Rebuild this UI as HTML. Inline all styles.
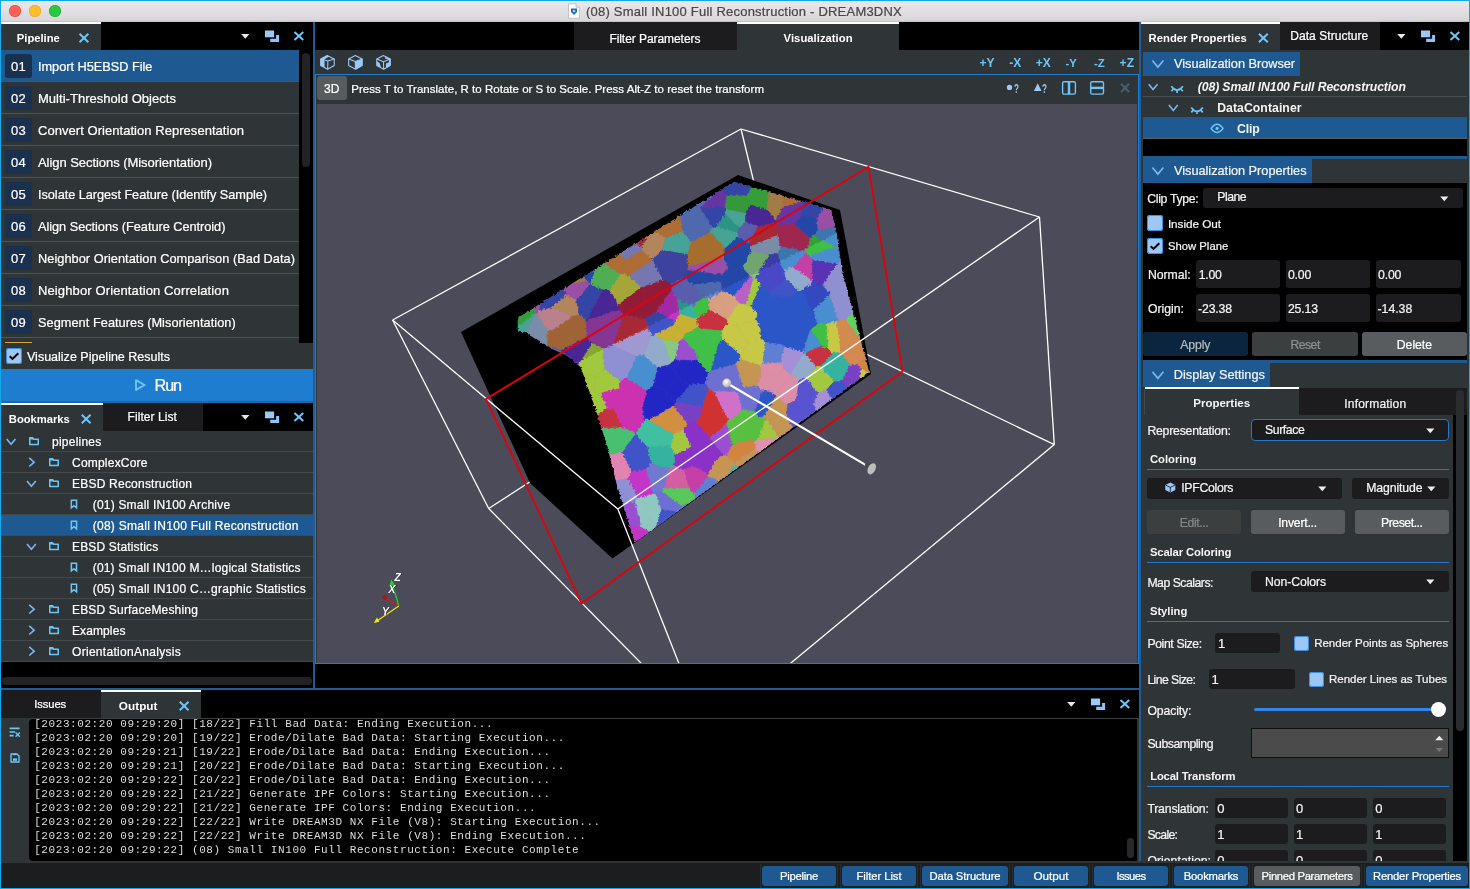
<!DOCTYPE html>
<html lang="en"><head><meta charset="utf-8"><title>(08) Small IN100 Full Reconstruction - DREAM3DNX</title>
<style>
html,body{margin:0;padding:0;}
body{width:1470px;height:889px;overflow:hidden;background:#000;position:relative;
font-family:"Liberation Sans",sans-serif;}
#app{position:absolute;left:0;top:0;width:1470px;height:889px;overflow:hidden;background:#000;will-change:transform;-webkit-font-smoothing:antialiased;}
#app div,#app svg,#app span.t{position:absolute;}
#app div{box-sizing:border-box;overflow:hidden;}
span.t{white-space:pre;display:block;-webkit-text-stroke:0.22px currentColor;}
</style></head>
<body><div id="app">
<div style="left:0px;top:0px;width:1470px;height:22px;background:linear-gradient(#ebe9eb,#d8d6d8);border-bottom:1px solid #c4c2c4;"></div>
<div style="left:9px;top:5px;width:12px;height:12px;background:#fe5f57;border-radius:50%;box-shadow:inset 0 0 0 0.5px #e2463f;"></div>
<div style="left:29px;top:5px;width:12px;height:12px;background:#febc2e;border-radius:50%;box-shadow:inset 0 0 0 0.5px #e0a028;"></div>
<div style="left:49px;top:5px;width:12px;height:12px;background:#28c840;border-radius:50%;box-shadow:inset 0 0 0 0.5px #1eab2d;"></div>
<svg style="left:567px;top:3px;" width="14" height="16" viewBox="0 0 14 16"><path d="M1.5 0.8 L9 0.8 L12.5 4.3 L12.5 15.2 L1.5 15.2Z" fill="#fdfdfd" stroke="#b9b9b9" stroke-width="0.8"/><path d="M9 0.8 L9 4.3 L12.5 4.3" fill="#e4e4e4" stroke="#b9b9b9" stroke-width="0.8"/><path d="M4 5.5 L10 5.5 L10 9 L7 12 L4 9Z" fill="#2a68b8"/><circle cx="7" cy="8" r="1.3" fill="#9fd0ff"/></svg>
<span class="t" style="left:586.00px;top:3.00px;font-size:13px;line-height:17px;color:#484848;letter-spacing:0.216px;">(08) Small IN100 Full Reconstruction - DREAM3DNX</span>
<div style="left:1px;top:22px;width:312px;height:666px;background:#2f3436;"></div>
<div style="left:1px;top:22px;width:312px;height:28px;background:#000;"></div>
<div style="left:1px;top:22px;width:100px;height:28px;background:#2f3436;"></div>
<div style="left:1px;top:22px;width:100px;height:2px;background:#fff;"></div>
<span class="t" style="left:16.80px;top:30.00px;font-size:11.25px;line-height:16px;color:#fff;font-weight:700;-webkit-text-stroke:0;letter-spacing:-0.018px;">Pipeline</span>
<svg style="left:76px;top:31px;" width="15" height="15" viewBox="0 0 15 15"><path d="M3.55 2.80L12.35 11.20M12.35 2.80L3.55 11.20" stroke="#6cc6fa" stroke-width="2.0" fill="none"/></svg>
<svg style="left:241px;top:33px;" width="10" height="7" viewBox="0 0 10 7"><path d="M0.2 1 L8.4 1 L4.3 5.7Z" fill="#e8e8e8"/></svg><svg style="left:265px;top:30px;" width="15" height="13" viewBox="0 0 15 13"><rect x="0" y="0.5" width="9.1" height="6.8" fill="#9cc8f8"/><path d="M11.1 4.9 H14.1 V12 H5.2 V8.7 H11.1Z" fill="#8fc2f8"/></svg><svg style="left:291px;top:28px;" width="15" height="15" viewBox="0 0 15 15"><path d="M3.45 3.90L12.25 11.90M12.25 3.90L3.45 11.90" stroke="#6cc6fa" stroke-width="2.0" fill="none"/></svg>
<div style="left:299px;top:50px;width:14px;height:293px;background:#000;"></div>
<div style="left:302px;top:53px;width:8px;height:114px;background:#232325;border-radius:4px;"></div>
<div style="left:1px;top:50px;width:298px;height:31px;background:#1e5a91;"></div>
<div style="left:1px;top:81px;width:298px;height:1px;background:#4f5355;"></div>
<div style="left:5px;top:54px;width:27px;height:24px;background:#19304f;border-radius:3px;"></div>
<span class="t" style="left:11.00px;top:58.00px;font-size:13px;line-height:17px;color:#fff;letter-spacing:0.266px;">01</span>
<span class="t" style="left:38.00px;top:58.00px;font-size:12.75px;line-height:17px;color:#fff;letter-spacing:-0.021px;">Import H5EBSD File</span>
<div style="left:1px;top:113px;width:298px;height:1px;background:#4f5355;"></div>
<div style="left:5px;top:86px;width:27px;height:24px;background:#19304f;border-radius:3px;"></div>
<span class="t" style="left:11.00px;top:90.00px;font-size:13px;line-height:17px;color:#fff;letter-spacing:0.266px;">02</span>
<span class="t" style="left:38.00px;top:90.00px;font-size:13px;line-height:17px;color:#fff;letter-spacing:0.031px;">Multi-Threshold Objects</span>
<div style="left:1px;top:145px;width:298px;height:1px;background:#4f5355;"></div>
<div style="left:5px;top:118px;width:27px;height:24px;background:#19304f;border-radius:3px;"></div>
<span class="t" style="left:11.00px;top:122.00px;font-size:13px;line-height:17px;color:#fff;letter-spacing:0.266px;">03</span>
<span class="t" style="left:38.00px;top:122.00px;font-size:13px;line-height:17px;color:#fff;letter-spacing:0.044px;">Convert Orientation Representation</span>
<div style="left:1px;top:177px;width:298px;height:1px;background:#4f5355;"></div>
<div style="left:5px;top:150px;width:27px;height:24px;background:#19304f;border-radius:3px;"></div>
<span class="t" style="left:11.00px;top:154.00px;font-size:13px;line-height:17px;color:#fff;letter-spacing:0.266px;">04</span>
<span class="t" style="left:38.00px;top:154.00px;font-size:13px;line-height:17px;color:#fff;letter-spacing:-0.051px;">Align Sections (Misorientation)</span>
<div style="left:1px;top:209px;width:298px;height:1px;background:#4f5355;"></div>
<div style="left:5px;top:182px;width:27px;height:24px;background:#19304f;border-radius:3px;"></div>
<span class="t" style="left:11.00px;top:186.00px;font-size:13px;line-height:17px;color:#fff;letter-spacing:0.266px;">05</span>
<span class="t" style="left:38.00px;top:186.00px;font-size:12.75px;line-height:17px;color:#fff;letter-spacing:-0.050px;">Isolate Largest Feature (Identify Sample)</span>
<div style="left:1px;top:241px;width:298px;height:1px;background:#4f5355;"></div>
<div style="left:5px;top:214px;width:27px;height:24px;background:#19304f;border-radius:3px;"></div>
<span class="t" style="left:11.00px;top:218.00px;font-size:13px;line-height:17px;color:#fff;letter-spacing:0.266px;">06</span>
<span class="t" style="left:38.00px;top:218.00px;font-size:12.75px;line-height:17px;color:#fff;letter-spacing:-0.034px;">Align Sections (Feature Centroid)</span>
<div style="left:1px;top:273px;width:298px;height:1px;background:#4f5355;"></div>
<div style="left:5px;top:246px;width:27px;height:24px;background:#19304f;border-radius:3px;"></div>
<span class="t" style="left:11.00px;top:250.00px;font-size:13px;line-height:17px;color:#fff;letter-spacing:0.266px;">07</span>
<span class="t" style="left:38.00px;top:250.00px;font-size:12.75px;line-height:17px;color:#fff;letter-spacing:0.045px;">Neighbor Orientation Comparison (Bad Data)</span>
<div style="left:1px;top:305px;width:298px;height:1px;background:#4f5355;"></div>
<div style="left:5px;top:278px;width:27px;height:24px;background:#19304f;border-radius:3px;"></div>
<span class="t" style="left:11.00px;top:282.00px;font-size:13px;line-height:17px;color:#fff;letter-spacing:0.266px;">08</span>
<span class="t" style="left:38.00px;top:282.00px;font-size:13px;line-height:17px;color:#fff;letter-spacing:0.120px;">Neighbor Orientation Correlation</span>
<div style="left:1px;top:337px;width:298px;height:1px;background:#4f5355;"></div>
<div style="left:5px;top:310px;width:27px;height:24px;background:#19304f;border-radius:3px;"></div>
<span class="t" style="left:11.00px;top:314.00px;font-size:13px;line-height:17px;color:#fff;letter-spacing:0.266px;">09</span>
<span class="t" style="left:38.00px;top:314.00px;font-size:12.75px;line-height:17px;color:#fff;letter-spacing:0.043px;">Segment Features (Misorientation)</span>
<div style="left:5px;top:342px;width:27px;height:1px;background:#d8a02c;"></div>
<div style="left:6px;top:348px;width:16px;height:16px;background:#9cc7f7;border-radius:3px;box-shadow:inset 0 0 0 1px #3d8fe6;"><svg style="left:0px;top:0px;" width="16" height="16" viewBox="0 0 16 16"><path d="M3.7 8.3 L6.5 10.9 L12.3 5.3" stroke="#000" stroke-width="2.1" fill="none"/></svg></div>
<span class="t" style="left:27.00px;top:349.00px;font-size:12.5px;line-height:17px;color:#fff;letter-spacing:0.004px;">Visualize Pipeline Results</span>
<div style="left:1px;top:369px;width:312px;height:33px;background:#1f7dd0;"></div>
<div style="left:1px;top:401px;width:312px;height:2px;background:#1a68b0;"></div>
<svg style="left:134px;top:378px;" width="13" height="14" viewBox="0 0 13 14"><path d="M2 2.1 L10.6 7 L2 11.9 Z" stroke="#6cc6fa" stroke-width="1.9" fill="none" stroke-linejoin="round"/></svg>
<span class="t" style="left:154.50px;top:374.00px;font-size:16.25px;line-height:22px;color:#fff;letter-spacing:-1.104px;">Run</span>
<div style="left:1px;top:403px;width:312px;height:28px;background:#000;"></div>
<div style="left:1px;top:403px;width:102px;height:28px;background:#2f3436;"></div>
<div style="left:1px;top:403px;width:102px;height:2px;background:#fff;"></div>
<div style="left:103px;top:403px;width:100px;height:28px;background:#1c1c1f;"></div>
<span class="t" style="left:8.80px;top:411.00px;font-size:11.25px;line-height:16px;color:#fff;font-weight:700;-webkit-text-stroke:0;letter-spacing:-0.031px;">Bookmarks</span>
<svg style="left:79px;top:412px;" width="15" height="15" viewBox="0 0 15 15"><path d="M2.75 2.80L11.55 11.20M11.55 2.80L2.75 11.20" stroke="#6cc6fa" stroke-width="2.0" fill="none"/></svg>
<span class="t" style="left:127.50px;top:409.00px;font-size:12px;line-height:16px;color:#fff;letter-spacing:0.074px;">Filter List</span>
<svg style="left:241px;top:414px;" width="10" height="7" viewBox="0 0 10 7"><path d="M0.2 1 L8.4 1 L4.3 5.7Z" fill="#e8e8e8"/></svg><svg style="left:265px;top:411px;" width="15" height="13" viewBox="0 0 15 13"><rect x="0" y="0.5" width="9.1" height="6.8" fill="#9cc8f8"/><path d="M11.1 4.9 H14.1 V12 H5.2 V8.7 H11.1Z" fill="#8fc2f8"/></svg><svg style="left:291px;top:409px;" width="15" height="15" viewBox="0 0 15 15"><path d="M3.45 3.90L12.25 11.90M12.25 3.90L3.45 11.90" stroke="#6cc6fa" stroke-width="2.0" fill="none"/></svg>
<div style="left:1px;top:662px;width:312px;height:26px;background:#000;"></div>
<div style="left:1px;top:451px;width:312px;height:1px;background:#44484a;"></div>
<svg style="left:5px;top:435px;" width="15" height="12" viewBox="0 0 15 12"><path d="M1.70 3.90 L6.10 9.30 L10.50 3.90" stroke="#79b7f4" stroke-width="1.6" fill="none"/></svg>
<svg style="left:29px;top:437px;" width="12" height="10" viewBox="0 0 12 10"><g transform="translate(0.00 0.10)"><path d="M0.75 7.45 V0.75 H3.8 L4.6 2.1 H9.25 V7.45 Z" stroke="#6cc6fa" stroke-width="1.5" fill="none" stroke-linejoin="round"/><path d="M0.75 0.75 H3.8 L4.6 2.4 H0.75Z" fill="#6cc6fa"/></g></svg>
<span class="t" style="left:52.00px;top:434.00px;font-size:12px;line-height:16px;color:#fff;letter-spacing:0.236px;">pipelines</span>
<div style="left:1px;top:472px;width:312px;height:1px;background:#44484a;"></div>
<svg style="left:28px;top:455px;" width="10" height="14" viewBox="0 0 10 14"><path d="M1.20 2.90 L6.20 7.20 L1.20 11.50" stroke="#79b7f4" stroke-width="1.6" fill="none"/></svg>
<svg style="left:49px;top:458px;" width="12" height="10" viewBox="0 0 12 10"><g transform="translate(0.00 0.10)"><path d="M0.75 7.45 V0.75 H3.8 L4.6 2.1 H9.25 V7.45 Z" stroke="#6cc6fa" stroke-width="1.5" fill="none" stroke-linejoin="round"/><path d="M0.75 0.75 H3.8 L4.6 2.4 H0.75Z" fill="#6cc6fa"/></g></svg>
<span class="t" style="left:72.00px;top:455.00px;font-size:12px;line-height:16px;color:#fff;letter-spacing:0.213px;">ComplexCore</span>
<div style="left:1px;top:493px;width:312px;height:1px;background:#44484a;"></div>
<svg style="left:26px;top:477px;" width="15" height="12" viewBox="0 0 15 12"><path d="M1.00 3.90 L5.40 9.30 L9.80 3.90" stroke="#79b7f4" stroke-width="1.6" fill="none"/></svg>
<svg style="left:49px;top:479px;" width="12" height="10" viewBox="0 0 12 10"><g transform="translate(0.00 0.10)"><path d="M0.75 7.45 V0.75 H3.8 L4.6 2.1 H9.25 V7.45 Z" stroke="#6cc6fa" stroke-width="1.5" fill="none" stroke-linejoin="round"/><path d="M0.75 0.75 H3.8 L4.6 2.4 H0.75Z" fill="#6cc6fa"/></g></svg>
<span class="t" style="left:72.00px;top:476.00px;font-size:12px;line-height:16px;color:#fff;letter-spacing:0.218px;">EBSD Reconstruction</span>
<div style="left:1px;top:514px;width:312px;height:1px;background:#44484a;"></div>
<svg style="left:70px;top:499px;" width="9" height="11" viewBox="0 0 9 11"><g transform="translate(0.60 0.40)"><path d="M0.75 0.75 H5.95 V8.5 L3.35 6.3 L0.75 8.5 Z" stroke="#6cc6fa" stroke-width="1.5" fill="none"/></g></svg>
<span class="t" style="left:92.70px;top:497.00px;font-size:12px;line-height:16px;color:#fff;letter-spacing:0.203px;">(01) Small IN100 Archive</span>
<div style="left:1px;top:515px;width:312px;height:20px;background:#1e5a91;"></div>
<div style="left:1px;top:535px;width:312px;height:1px;background:#44484a;"></div>
<svg style="left:70px;top:520px;" width="9" height="11" viewBox="0 0 9 11"><g transform="translate(0.60 0.40)"><path d="M0.75 0.75 H5.95 V8.5 L3.35 6.3 L0.75 8.5 Z" stroke="#6cc6fa" stroke-width="1.5" fill="none"/></g></svg>
<span class="t" style="left:92.70px;top:518.00px;font-size:12px;line-height:16px;color:#fff;letter-spacing:0.276px;">(08) Small IN100 Full Reconstruction</span>
<div style="left:1px;top:556px;width:312px;height:1px;background:#44484a;"></div>
<svg style="left:26px;top:540px;" width="15" height="12" viewBox="0 0 15 12"><path d="M1.00 3.90 L5.40 9.30 L9.80 3.90" stroke="#79b7f4" stroke-width="1.6" fill="none"/></svg>
<svg style="left:49px;top:542px;" width="12" height="10" viewBox="0 0 12 10"><g transform="translate(0.00 0.10)"><path d="M0.75 7.45 V0.75 H3.8 L4.6 2.1 H9.25 V7.45 Z" stroke="#6cc6fa" stroke-width="1.5" fill="none" stroke-linejoin="round"/><path d="M0.75 0.75 H3.8 L4.6 2.4 H0.75Z" fill="#6cc6fa"/></g></svg>
<span class="t" style="left:72.00px;top:539.00px;font-size:12px;line-height:16px;color:#fff;letter-spacing:0.158px;">EBSD Statistics</span>
<div style="left:1px;top:577px;width:312px;height:1px;background:#44484a;"></div>
<svg style="left:70px;top:562px;" width="9" height="11" viewBox="0 0 9 11"><g transform="translate(0.60 0.40)"><path d="M0.75 0.75 H5.95 V8.5 L3.35 6.3 L0.75 8.5 Z" stroke="#6cc6fa" stroke-width="1.5" fill="none"/></g></svg>
<span class="t" style="left:92.70px;top:560.00px;font-size:12px;line-height:16px;color:#fff;letter-spacing:0.196px;">(01) Small IN100 M…logical Statistics</span>
<div style="left:1px;top:598px;width:312px;height:1px;background:#44484a;"></div>
<svg style="left:70px;top:583px;" width="9" height="11" viewBox="0 0 9 11"><g transform="translate(0.60 0.40)"><path d="M0.75 0.75 H5.95 V8.5 L3.35 6.3 L0.75 8.5 Z" stroke="#6cc6fa" stroke-width="1.5" fill="none"/></g></svg>
<span class="t" style="left:92.70px;top:581.00px;font-size:12px;line-height:16px;color:#fff;letter-spacing:0.231px;">(05) Small IN100 C…graphic Statistics</span>
<div style="left:1px;top:619px;width:312px;height:1px;background:#44484a;"></div>
<svg style="left:28px;top:602px;" width="10" height="14" viewBox="0 0 10 14"><path d="M1.20 2.90 L6.20 7.20 L1.20 11.50" stroke="#79b7f4" stroke-width="1.6" fill="none"/></svg>
<svg style="left:49px;top:605px;" width="12" height="10" viewBox="0 0 12 10"><g transform="translate(0.00 0.10)"><path d="M0.75 7.45 V0.75 H3.8 L4.6 2.1 H9.25 V7.45 Z" stroke="#6cc6fa" stroke-width="1.5" fill="none" stroke-linejoin="round"/><path d="M0.75 0.75 H3.8 L4.6 2.4 H0.75Z" fill="#6cc6fa"/></g></svg>
<span class="t" style="left:72.00px;top:602.00px;font-size:12px;line-height:16px;color:#fff;letter-spacing:0.172px;">EBSD SurfaceMeshing</span>
<div style="left:1px;top:640px;width:312px;height:1px;background:#44484a;"></div>
<svg style="left:28px;top:623px;" width="10" height="14" viewBox="0 0 10 14"><path d="M1.20 2.90 L6.20 7.20 L1.20 11.50" stroke="#79b7f4" stroke-width="1.6" fill="none"/></svg>
<svg style="left:49px;top:626px;" width="12" height="10" viewBox="0 0 12 10"><g transform="translate(0.00 0.10)"><path d="M0.75 7.45 V0.75 H3.8 L4.6 2.1 H9.25 V7.45 Z" stroke="#6cc6fa" stroke-width="1.5" fill="none" stroke-linejoin="round"/><path d="M0.75 0.75 H3.8 L4.6 2.4 H0.75Z" fill="#6cc6fa"/></g></svg>
<span class="t" style="left:72.00px;top:623.00px;font-size:12px;line-height:16px;color:#fff;letter-spacing:0.102px;">Examples</span>
<div style="left:1px;top:661px;width:312px;height:1px;background:#44484a;"></div>
<svg style="left:28px;top:644px;" width="10" height="14" viewBox="0 0 10 14"><path d="M1.20 2.90 L6.20 7.20 L1.20 11.50" stroke="#79b7f4" stroke-width="1.6" fill="none"/></svg>
<svg style="left:49px;top:647px;" width="12" height="10" viewBox="0 0 12 10"><g transform="translate(0.00 0.10)"><path d="M0.75 7.45 V0.75 H3.8 L4.6 2.1 H9.25 V7.45 Z" stroke="#6cc6fa" stroke-width="1.5" fill="none" stroke-linejoin="round"/><path d="M0.75 0.75 H3.8 L4.6 2.4 H0.75Z" fill="#6cc6fa"/></g></svg>
<span class="t" style="left:72.00px;top:644.00px;font-size:12px;line-height:16px;color:#fff;letter-spacing:0.295px;">OrientationAnalysis</span>
<div style="left:2px;top:677px;width:310px;height:8px;background:#232325;border-radius:4px;"></div>
<div style="left:313px;top:22px;width:2px;height:666px;background:#1f5c98;"></div>
<div style="left:315px;top:22px;width:824px;height:28px;background:#000;"></div>
<div style="left:315px;top:50px;width:824px;height:614px;background:#2f3436;"></div>
<div style="left:315px;top:664px;width:824px;height:24px;background:#000;"></div>
<div style="left:574px;top:22px;width:163px;height:28px;background:#1c1c1f;"></div>
<div style="left:737px;top:22px;width:162px;height:28px;background:#2f3436;"></div>
<div style="left:737px;top:22px;width:162px;height:2px;background:#fff;"></div>
<span class="t" style="left:609.40px;top:31.00px;font-size:12px;line-height:16px;color:#fff;letter-spacing:-0.061px;">Filter Parameters</span>
<span class="t" style="left:783.60px;top:30.00px;font-size:11.25px;line-height:16px;color:#fff;font-weight:700;-webkit-text-stroke:0;letter-spacing:0.034px;">Visualization</span>
<svg style="left:319px;top:54px;" width="17" height="17" viewBox="0 0 17 17"><g transform="translate(8.45 8.40) scale(0.91) translate(-7.65 -7.8)"><polygon points="0.2,4.1 7.4,0.3 9.5,1.4 4.5,4.3 4.5,13.5 0.2,11.2" fill="#9cc8f8"/><path d="M8.1 6.3 L7.9 15.3 M8.1 6.3 L15.1 4.1 M8.1 6.3 L4.5 5.1" stroke="#9cc8f8" stroke-width="1.2" fill="none" stroke-linejoin="round"/><polygon points="7.4,0.3 15.1,4.1 15.1,11.2 7.8,15.3 0.2,11.2 0.2,4.1" stroke="#9cc8f8" stroke-width="1.2" fill="none" stroke-linejoin="round"/></g></svg>
<svg style="left:347px;top:54px;" width="17" height="17" viewBox="0 0 17 17"><g transform="translate(8.45 8.40) scale(0.91) translate(-7.65 -7.8)"><polygon points="7.4,7 15.1,4.1 15.1,11.2 7.8,15.3" fill="#9cc8f8"/><path d="M7.4 6.9 L7.7 15.3 M7.4 6.9 L15.1 4.1 M7.4 6.9 L0.2 4.1" stroke="#9cc8f8" stroke-width="1.2" fill="none" stroke-linejoin="round"/><polygon points="7.4,0.3 15.1,4.1 15.1,11.2 7.8,15.3 0.2,11.2 0.2,4.1" stroke="#9cc8f8" stroke-width="1.2" fill="none" stroke-linejoin="round"/></g></svg>
<svg style="left:375px;top:54px;" width="17" height="17" viewBox="0 0 17 17"><g transform="translate(8.55 8.40) scale(0.91) translate(-7.65 -7.8)"><polygon points="7.4,0.3 15.1,4.1 15.1,11.2 10.3,13.8 10.3,9 13.6,7.6 13.6,5 9,3.6 10,2 " fill="#9cc8f8"/><polygon points="0.2,6.3 3.3,8.4 4.9,13.3 0.2,11.2" fill="#9cc8f8"/><path d="M7.6 7 L7.8 15.3 M7.6 7 L15.1 4.1 M7.6 7 L0.2 4.1" stroke="#9cc8f8" stroke-width="1.2" fill="none" stroke-linejoin="round"/><polygon points="7.4,0.3 15.1,4.1 15.1,11.2 7.8,15.3 0.2,11.2 0.2,4.1" stroke="#9cc8f8" stroke-width="1.2" fill="none" stroke-linejoin="round"/></g></svg>
<span class="t" style="left:979.50px;top:55.00px;font-size:12px;line-height:16px;color:#6cc6fa;font-weight:700;-webkit-text-stroke:0;letter-spacing:-0.058px;">+Y</span>
<span class="t" style="left:1009.20px;top:55.00px;font-size:12px;line-height:16px;color:#6cc6fa;font-weight:700;-webkit-text-stroke:0;letter-spacing:0.050px;">-X</span>
<span class="t" style="left:1035.70px;top:55.00px;font-size:12px;line-height:16px;color:#6cc6fa;font-weight:700;-webkit-text-stroke:0;letter-spacing:-0.058px;">+X</span>
<span class="t" style="left:1065.40px;top:55.00px;font-size:11.25px;line-height:16px;color:#6cc6fa;font-weight:700;-webkit-text-stroke:0;letter-spacing:0.025px;">-Y</span>
<span class="t" style="left:1094.00px;top:55.00px;font-size:11.5px;line-height:16px;color:#6cc6fa;font-weight:700;-webkit-text-stroke:0;letter-spacing:-0.030px;">-Z</span>
<span class="t" style="left:1119.60px;top:55.00px;font-size:12px;line-height:16px;color:#6cc6fa;font-weight:700;-webkit-text-stroke:0;letter-spacing:0.028px;">+Z</span>
<div style="left:315px;top:74px;width:824px;height:590px;border:1px solid #1f7dd2;"></div>
<div style="left:317px;top:76px;width:30px;height:24px;background:#585c5e;border-radius:3px;"></div>
<span class="t" style="left:324.00px;top:81.00px;font-size:12px;line-height:16px;color:#fff;letter-spacing:-0.022px;">3D</span>
<span class="t" style="left:351.30px;top:81.00px;font-size:11.5px;line-height:16px;color:#fff;letter-spacing:0.018px;">Press T to Translate, R to Rotate or S to Scale. Press Alt-Z to reset the transform</span>
<svg style="left:1006px;top:80px;" width="8" height="15" viewBox="0 0 8 15"><circle cx="3.5" cy="7.4" r="2.65" fill="#9cc8f8"/></svg>
<span class="t" style="left:1014.00px;top:80.00px;font-size:13px;line-height:17px;color:#9cc8f8;font-weight:700;-webkit-text-stroke:0;transform:scaleX(0.62);transform-origin:0 0;">?</span>
<svg style="left:1033px;top:80px;" width="10" height="15" viewBox="0 0 10 15"><path d="M0.9 11 L4.7 3.2 L8.5 11Z" fill="#9cc8f8"/></svg>
<span class="t" style="left:1042.20px;top:80.00px;font-size:13px;line-height:17px;color:#9cc8f8;font-weight:700;-webkit-text-stroke:0;transform:scaleX(0.62);transform-origin:0 0;">?</span>
<svg style="left:1061px;top:80px;" width="16" height="16" viewBox="0 0 16 16"><rect x="1.6" y="1.7" width="12.8" height="12.4" rx="1.6" fill="none" stroke="#6cc6fa" stroke-width="1.4"/><path d="M8 1.7V14.1" stroke="#6cc6fa" stroke-width="2.4"/></svg>
<svg style="left:1089px;top:80px;" width="16" height="16" viewBox="0 0 16 16"><rect x="1.7" y="1.7" width="12.8" height="12.4" rx="1.6" fill="none" stroke="#6cc6fa" stroke-width="1.4"/><path d="M1.7 7.9H14.5" stroke="#6cc6fa" stroke-width="2.4"/></svg>
<svg style="left:1118px;top:80px;" width="15" height="15" viewBox="0 0 15 15"><path d="M3.1 3.8 L11.1 12 M11.1 3.8 L3.1 12" stroke="#41606f" stroke-width="2.1" fill="none"/></svg>
<svg style="left:317px;top:104px;" width="820" height="559" viewBox="0 0 820 559"><rect width="820" height="559" fill="#4c4b59"/><line x1="424.0" y1="25.0" x2="469.2" y2="211.7" stroke="#fff" stroke-width="1.3"/><line x1="171.7" y1="404.5" x2="469.2" y2="211.7" stroke="#fff" stroke-width="1.3"/><line x1="737.3" y1="340.6" x2="469.2" y2="211.7" stroke="#fff" stroke-width="1.3"/><polygon points="144.0,228.0 421.0,71.0 523.0,106.0 554.0,270.0 317.5,439.0 295.4,454.6 213.0,379.0" fill="#000"/><defs><filter id="jag" x="-5%" y="-5%" width="110%" height="110%"><feTurbulence type="fractalNoise" baseFrequency="0.42" numOctaves="1" seed="4" result="n"/><feDisplacementMap in="SourceGraphic" in2="n" scale="4.5" xChannelSelector="R" yChannelSelector="G"/></filter><clipPath id="gclip"><polygon points="153.0,236.0 417.0,77.0 515.0,105.0 553.0,268.5 317.0,439.5 243.0,396.0"/></clipPath></defs><polygon points="215.0,217.0 417.0,78.5 513.5,106.5 519.0,129.0 525.0,168.0 551.5,268.0 324.0,434.0 309.0,386.0 300.0,348.0 289.0,312.0 276.0,270.0 255.0,254.0 235.0,245.0 221.0,235.0" fill="#7f74b6"/><g clip-path="url(#gclip)"><g filter="url(#jag)"><polygon points="201.0,214.0 417.0,78.0 514.0,106.0 519.0,128.0 525.0,168.0 552.0,268.0 318.0,438.0 300.0,380.0 291.0,344.0 280.0,308.0 264.0,263.0 246.0,248.0 228.0,241.0 210.0,229.0 201.0,226.0" fill="#8a70b8"/><polygon points="218.2,209.8 219.6,209.2 216.2,204.4 209.5,208.7" fill="#3fbf45" stroke="#3fbf45" stroke-width="0.6"/><polygon points="219.6,209.2 219.9,209.2 222.3,206.7 224.0,199.5 216.2,204.4" fill="#b860c8" stroke="#b860c8" stroke-width="0.6"/><polygon points="229.7,241.7 244.7,247.5 244.1,245.7 230.6,240.9" fill="#6d6fd0" stroke="#6d6fd0" stroke-width="0.6"/><polygon points="313.3,422.3 313.0,421.8 313.2,422.4" fill="#8f8fd4" stroke="#8f8fd4" stroke-width="0.6"/><polygon points="278.5,272.5 287.1,265.0 286.6,244.0 275.5,238.8 261.1,260.6 264.0,263.0 266.4,269.7" fill="#a2c83c" stroke="#a2c83c" stroke-width="0.6"/><polygon points="278.5,272.5 266.4,269.7 273.7,290.3 277.0,287.5" fill="#a2c83c" stroke="#a2c83c" stroke-width="0.6"/><polygon points="290.1,304.5 288.1,297.2 283.0,289.2 277.0,287.5 273.7,290.3 280.0,308.0 280.8,310.5" fill="#a2c83c" stroke="#a2c83c" stroke-width="0.6"/><polygon points="306.7,323.7 296.7,304.6 290.1,304.5 280.8,310.5 285.0,324.5" fill="#c8323f" stroke="#c8323f" stroke-width="0.6"/><polygon points="319.1,328.9 306.7,323.7 285.0,324.5 291.0,344.0 292.9,351.6 305.1,347.9 319.1,329.7" fill="#48c070" stroke="#48c070" stroke-width="0.6"/><polygon points="311.0,374.8 314.9,368.1 305.1,347.9 292.9,351.6 299.1,376.6" fill="#e284b2" stroke="#e284b2" stroke-width="0.6"/><polygon points="321.2,394.1 311.0,374.8 299.1,376.6 300.0,380.0 306.7,401.7 318.1,396.9" fill="#8f8fd4" stroke="#8f8fd4" stroke-width="0.6"/><polygon points="318.1,396.9 306.7,401.7 313.0,421.8 313.3,422.3 324.5,422.9" fill="#9a50d0" stroke="#9a50d0" stroke-width="0.6"/><polygon points="324.5,422.9 313.3,422.3 313.2,422.4 318.0,438.0 332.8,427.2" fill="#c234c6" stroke="#c234c6" stroke-width="0.6"/><polygon points="270.2,177.2 273.8,179.3 278.0,165.5 265.9,173.1" fill="#2b56c8" stroke="#2b56c8" stroke-width="0.6"/><polygon points="301.4,284.9 303.9,276.6 287.1,265.0 278.5,272.5 277.0,287.5 283.0,289.2" fill="#a2c83c" stroke="#a2c83c" stroke-width="0.6"/><polygon points="302.3,289.4 301.4,284.9 283.0,289.2 288.1,297.2" fill="#cc30b0" stroke="#cc30b0" stroke-width="0.6"/><polygon points="290.1,304.5 296.7,304.6 304.1,294.7 302.3,289.4 288.1,297.2" fill="#cc30b0" stroke="#cc30b0" stroke-width="0.6"/><polygon points="325.6,305.3 304.1,294.7 296.7,304.6 306.7,323.7 319.1,328.9 328.3,316.1" fill="#cc30b0" stroke="#cc30b0" stroke-width="0.6"/><polygon points="330.8,343.2 319.1,329.7 305.1,347.9 314.9,368.1 329.0,365.3 334.2,358.8" fill="#3f52c8" stroke="#3f52c8" stroke-width="0.6"/><polygon points="329.0,365.3 314.9,368.1 311.0,374.8 321.2,394.1 324.6,393.8 336.9,389.7" fill="#c234c6" stroke="#c234c6" stroke-width="0.6"/><polygon points="332.8,427.2 336.6,424.5 324.6,393.8 321.2,394.1 318.1,396.9 324.5,422.9" fill="#8fc8c0" stroke="#8fc8c0" stroke-width="0.6"/><polygon points="344.7,406.0 338.9,390.1 336.9,389.7 324.6,393.8 336.6,424.5 339.0,422.8" fill="#8fc8c0" stroke="#8fc8c0" stroke-width="0.6"/><polygon points="286.6,244.0 287.1,265.0 303.9,276.6 309.3,274.5 319.9,252.5 295.5,241.0" fill="#8f8fd4" stroke="#8f8fd4" stroke-width="0.6"/><polygon points="304.1,294.7 325.6,305.3 330.3,286.2 309.3,274.5 303.9,276.6 301.4,284.9 302.3,289.4" fill="#cc30b0" stroke="#cc30b0" stroke-width="0.6"/><polygon points="334.2,358.8 329.0,365.3 336.9,389.7 338.9,390.1 345.1,387.1 347.2,384.8 352.8,364.0" fill="#7078d0" stroke="#7078d0" stroke-width="0.6"/><polygon points="344.7,406.0 359.9,407.6 364.9,402.0 345.1,387.1 338.9,390.1" fill="#6d6fd0" stroke="#6d6fd0" stroke-width="0.6"/><polygon points="359.9,407.6 344.7,406.0 339.0,422.8 359.9,407.6" fill="#3f52c8" stroke="#3f52c8" stroke-width="0.6"/><polygon points="331.3,224.2 296.2,239.8 295.5,241.0 319.9,252.5 326.6,250.9 334.4,230.4" fill="#a098d0" stroke="#a098d0" stroke-width="0.6"/><polygon points="326.6,250.9 319.9,252.5 309.3,274.5 330.3,286.2 336.7,281.4 340.8,263.4" fill="#4a8fd0" stroke="#4a8fd0" stroke-width="0.6"/><polygon points="357.9,299.2 357.9,298.6 345.8,285.8 336.7,281.4 330.3,286.2 325.6,305.3 328.3,316.1 332.0,315.9 357.2,302.1" fill="#2428c4" stroke="#2428c4" stroke-width="0.6"/><polygon points="357.4,329.7 332.0,315.9 328.3,316.1 319.1,328.9 319.1,329.7 330.8,343.2 353.8,341.8" fill="#3fc0a0" stroke="#3fc0a0" stroke-width="0.6"/><polygon points="357.5,361.6 358.4,350.8 353.8,341.8 330.8,343.2 334.2,358.8 352.8,364.0" fill="#35b3a0" stroke="#35b3a0" stroke-width="0.6"/><polygon points="347.2,384.8 372.4,384.5 367.0,365.7 357.5,361.6 352.8,364.0" fill="#d35fa2" stroke="#d35fa2" stroke-width="0.6"/><polygon points="364.9,402.0 370.3,400.0 378.5,394.1 377.6,389.5 372.4,384.5 347.2,384.8 345.1,387.1" fill="#58c85a" stroke="#58c85a" stroke-width="0.6"/><polygon points="364.9,402.0 359.9,407.6 359.9,407.6 370.3,400.0" fill="#5f7fd2" stroke="#5f7fd2" stroke-width="0.6"/><polygon points="345.8,235.2 337.7,230.7 334.4,230.4 326.6,250.9 340.8,263.4 352.7,260.8 354.4,258.8" fill="#92aacb" stroke="#92aacb" stroke-width="0.6"/><polygon points="340.8,263.4 336.7,281.4 345.8,285.8 363.2,275.3 352.7,260.8" fill="#2428c4" stroke="#2428c4" stroke-width="0.6"/><polygon points="372.7,281.4 363.2,275.3 345.8,285.8 357.9,298.6" fill="#2428c4" stroke="#2428c4" stroke-width="0.6"/><polygon points="366.9,325.4 370.7,320.2 357.2,302.1 332.0,315.9 357.4,329.7" fill="#d09040" stroke="#d09040" stroke-width="0.6"/><polygon points="374.6,343.3 366.9,325.4 357.4,329.7 353.8,341.8 358.4,350.8" fill="#a3c83f" stroke="#a3c83f" stroke-width="0.6"/><polygon points="367.0,365.7 376.1,361.6 380.1,350.9 378.7,345.2 374.6,343.3 358.4,350.8 357.5,361.6" fill="#8a30c8" stroke="#8a30c8" stroke-width="0.6"/><polygon points="367.0,365.7 372.4,384.5 377.6,389.5 392.0,372.6 391.5,369.4 376.1,361.6" fill="#c43fa6" stroke="#c43fa6" stroke-width="0.6"/><polygon points="331.5,131.8 319.6,139.3 324.7,143.8" fill="#c8323f" stroke="#c8323f" stroke-width="0.6"/><polygon points="337.7,230.7 358.0,220.4 358.0,216.5 339.0,207.1 328.7,213.9 328.1,214.7 331.3,224.2 334.4,230.4" fill="#3f52c8" stroke="#3f52c8" stroke-width="0.6"/><polygon points="345.8,235.2 361.8,238.0 366.6,234.3 368.0,230.3 358.0,220.4 337.7,230.7" fill="#c8b030" stroke="#c8b030" stroke-width="0.6"/><polygon points="358.1,256.2 361.8,238.0 345.8,235.2 354.4,258.8" fill="#86c884" stroke="#86c884" stroke-width="0.6"/><polygon points="380.7,250.5 366.6,234.3 361.8,238.0 358.1,256.2 381.0,256.2" fill="#9a50d0" stroke="#9a50d0" stroke-width="0.6"/><polygon points="391.4,268.7 381.0,256.2 358.1,256.2 354.4,258.8 352.7,260.8 363.2,275.3 372.7,281.4 389.0,279.1" fill="#2428c4" stroke="#2428c4" stroke-width="0.6"/><polygon points="389.0,279.1 372.7,281.4 357.9,298.6 357.9,299.2 385.5,302.1 392.0,284.7" fill="#3f52c8" stroke="#3f52c8" stroke-width="0.6"/><polygon points="385.5,302.1 357.9,299.2 357.2,302.1 370.7,320.2 379.8,318.2 384.3,311.3" fill="#7a3fc4" stroke="#7a3fc4" stroke-width="0.6"/><polygon points="379.8,318.2 370.7,320.2 366.9,325.4 374.6,343.3 378.7,345.2 393.2,334.1 393.2,333.6" fill="#8a30c8" stroke="#8a30c8" stroke-width="0.6"/><polygon points="393.2,334.1 378.7,345.2 380.1,350.9 399.4,356.1 406.7,350.9" fill="#8a30c8" stroke="#8a30c8" stroke-width="0.6"/><polygon points="391.5,369.4 399.4,356.1 380.1,350.9 376.1,361.6" fill="#8a30c8" stroke="#8a30c8" stroke-width="0.6"/><polygon points="418.2,360.0 417.6,358.5 409.8,351.2 406.7,350.9 399.4,356.1 391.5,369.4 392.0,372.6 401.0,377.7 411.5,370.1" fill="#c49552" stroke="#c49552" stroke-width="0.6"/><polygon points="378.5,394.1 401.0,377.7 392.0,372.6 377.6,389.5" fill="#5f7fd2" stroke="#5f7fd2" stroke-width="0.6"/><polygon points="376.1,202.4 360.2,194.7 362.0,210.0 380.5,215.4 380.5,215.4" fill="#35b3a0" stroke="#35b3a0" stroke-width="0.6"/><polygon points="368.0,230.3 381.3,222.7 380.5,215.4 362.0,210.0 358.0,216.5 358.0,220.4" fill="#c8b030" stroke="#c8b030" stroke-width="0.6"/><polygon points="385.3,242.2 384.5,224.8 381.3,222.7 368.0,230.3 366.6,234.3 380.7,250.5" fill="#40c048" stroke="#40c048" stroke-width="0.6"/><polygon points="392.0,284.7 385.5,302.1 384.3,311.3 411.3,315.7 397.4,287.3" fill="#d03030" stroke="#d03030" stroke-width="0.6"/><polygon points="409.8,319.5 411.5,315.9 411.3,315.7 384.3,311.3 379.8,318.2 393.2,333.6" fill="#d03030" stroke="#d03030" stroke-width="0.6"/><polygon points="415.5,341.3 409.8,319.5 393.2,333.6 393.2,334.1 406.7,350.9 409.8,351.2" fill="#9a50d0" stroke="#9a50d0" stroke-width="0.6"/><polygon points="418.2,360.0 411.5,370.1 421.4,362.9" fill="#40c0b0" stroke="#40c0b0" stroke-width="0.6"/><polygon points="392.5,204.9 392.2,194.4 385.9,191.9 376.1,202.4 380.5,215.4" fill="#3fbf45" stroke="#3fbf45" stroke-width="0.6"/><polygon points="380.5,215.4 381.3,222.7 384.5,224.8 405.0,227.0 410.8,219.2 410.4,216.0 409.6,215.0 392.5,204.9 380.5,215.4" fill="#c8323f" stroke="#c8323f" stroke-width="0.6"/><polygon points="405.7,234.9 405.0,227.0 384.5,224.8 385.3,242.2 401.8,239.7" fill="#40c048" stroke="#40c048" stroke-width="0.6"/><polygon points="385.3,242.2 380.7,250.5 381.0,256.2 391.4,268.7 394.3,266.7 401.8,239.7" fill="#40c048" stroke="#40c048" stroke-width="0.6"/><polygon points="423.4,250.6 405.7,234.9 401.8,239.7 394.3,266.7 419.3,260.2 423.5,254.8" fill="#2b56c8" stroke="#2b56c8" stroke-width="0.6"/><polygon points="394.3,266.7 391.4,268.7 389.0,279.1 392.0,284.7 397.4,287.3 422.2,288.4 426.8,283.4 419.3,260.2" fill="#6d6fd0" stroke="#6d6fd0" stroke-width="0.6"/><polygon points="411.3,315.7 411.5,315.9 416.3,315.0 425.3,305.4 422.2,288.4 397.4,287.3" fill="#d070c8" stroke="#d070c8" stroke-width="0.6"/><polygon points="419.0,339.3 423.6,322.5 416.3,315.0 411.5,315.9 409.8,319.5 415.5,341.3" fill="#58c040" stroke="#58c040" stroke-width="0.6"/><polygon points="431.2,326.5 423.6,322.5 419.0,339.3 435.4,335.9" fill="#58c040" stroke="#58c040" stroke-width="0.6"/><polygon points="417.6,358.5 438.7,344.8 438.0,337.6 435.4,335.9 419.0,339.3 415.5,341.3 409.8,351.2" fill="#d2843f" stroke="#d2843f" stroke-width="0.6"/><polygon points="417.6,358.5 418.2,360.0 421.4,362.9 441.7,348.2 438.7,344.8" fill="#c49552" stroke="#c49552" stroke-width="0.6"/><polygon points="392.5,204.9 409.6,215.0 403.0,188.4 392.2,194.4" fill="#d8a080" stroke="#d8a080" stroke-width="0.6"/><polygon points="410.4,216.0 421.9,199.8 417.5,191.4 404.4,186.8 403.0,188.4 409.6,215.0" fill="#d8a080" stroke="#d8a080" stroke-width="0.6"/><polygon points="431.5,239.3 418.9,221.3 410.8,219.2 405.0,227.0 405.7,234.9 423.4,250.6" fill="#c8c846" stroke="#c8c846" stroke-width="0.6"/><polygon points="419.3,260.2 426.8,283.4 440.7,282.3 444.2,268.3 443.8,261.4 423.5,254.8" fill="#c49552" stroke="#c49552" stroke-width="0.6"/><polygon points="422.2,288.4 425.3,305.4 437.9,307.6 445.9,286.7 440.7,282.3 426.8,283.4" fill="#6d6fd0" stroke="#6d6fd0" stroke-width="0.6"/><polygon points="443.0,312.4 437.9,307.6 425.3,305.4 416.3,315.0 423.6,322.5 431.2,326.5" fill="#58c040" stroke="#58c040" stroke-width="0.6"/><polygon points="441.3,335.6 448.5,315.9 445.7,313.3 443.0,312.4 431.2,326.5 435.4,335.9 438.0,337.6" fill="#58c040" stroke="#58c040" stroke-width="0.6"/><polygon points="459.4,334.3 461.4,332.5 451.1,316.8 448.5,315.9 441.3,335.6" fill="#a3c83f" stroke="#a3c83f" stroke-width="0.6"/><polygon points="438.7,344.8 441.7,348.2 459.2,335.4 459.4,334.3 441.3,335.6 438.0,337.6" fill="#e090b0" stroke="#e090b0" stroke-width="0.6"/><polygon points="405.0,170.9 403.7,177.5 404.4,186.8 417.5,191.4 433.7,172.4 426.1,163.8 411.3,162.1" fill="#2b56c8" stroke="#2b56c8" stroke-width="0.6"/><polygon points="436.8,173.8 433.7,172.4 417.5,191.4 421.9,199.8 429.2,200.6" fill="#b860c8" stroke="#b860c8" stroke-width="0.6"/><polygon points="429.2,200.6 421.9,199.8 410.4,216.0 410.8,219.2 418.9,221.3 439.5,215.5 440.5,210.9 440.2,208.9 434.2,203.2" fill="#c8c846" stroke="#c8c846" stroke-width="0.6"/><polygon points="444.0,225.6 439.5,215.5 418.9,221.3 431.5,239.3 443.5,234.0" fill="#c8c846" stroke="#c8c846" stroke-width="0.6"/><polygon points="443.8,261.4 445.5,260.1 448.8,238.5 443.5,234.0 431.5,239.3 423.4,250.6 423.5,254.8" fill="#c8c846" stroke="#c8c846" stroke-width="0.6"/><polygon points="445.9,286.7 454.9,288.7 457.5,272.6 444.2,268.3 440.7,282.3" fill="#dc8ea6" stroke="#dc8ea6" stroke-width="0.6"/><polygon points="445.7,313.3 459.7,292.8 458.1,290.4 454.9,288.7 445.9,286.7 437.9,307.6 443.0,312.4" fill="#2b56c8" stroke="#2b56c8" stroke-width="0.6"/><polygon points="459.7,292.8 445.7,313.3 448.5,315.9 451.1,316.8 469.4,309.1 470.9,300.8" fill="#c49552" stroke="#c49552" stroke-width="0.6"/><polygon points="451.1,316.8 461.4,332.5 463.6,332.2 474.6,324.3 475.1,322.6 469.4,309.1" fill="#c49552" stroke="#c49552" stroke-width="0.6"/><polygon points="461.4,332.5 459.4,334.3 459.2,335.4 463.6,332.2" fill="#e090b0" stroke="#e090b0" stroke-width="0.6"/><polygon points="438.3,174.2 436.8,173.8 429.2,200.6 434.2,203.2 443.9,180.2 440.1,175.1" fill="#a3c83f" stroke="#a3c83f" stroke-width="0.6"/><polygon points="443.9,180.2 434.2,203.2 440.2,208.9 454.1,193.4 454.4,192.3 452.9,188.2" fill="#2b56c8" stroke="#2b56c8" stroke-width="0.6"/><polygon points="440.5,210.9 465.5,211.9 454.1,193.4 440.2,208.9" fill="#2b56c8" stroke="#2b56c8" stroke-width="0.6"/><polygon points="468.4,214.0 465.5,211.9 440.5,210.9 439.5,215.5 444.0,225.6 465.9,219.5" fill="#2b56c8" stroke="#2b56c8" stroke-width="0.6"/><polygon points="466.5,241.0 467.6,237.3 465.9,219.5 444.0,225.6 443.5,234.0 448.8,238.5" fill="#2b56c8" stroke="#2b56c8" stroke-width="0.6"/><polygon points="445.5,260.1 463.6,258.9 467.7,243.3 466.5,241.0 448.8,238.5" fill="#5f7fd2" stroke="#5f7fd2" stroke-width="0.6"/><polygon points="444.2,268.3 457.5,272.6 467.4,265.3 463.6,258.9 445.5,260.1 443.8,261.4" fill="#dc8ea6" stroke="#dc8ea6" stroke-width="0.6"/><polygon points="458.1,290.4 474.3,271.3 473.7,270.2 467.4,265.3 457.5,272.6 454.9,288.7" fill="#dc8ea6" stroke="#dc8ea6" stroke-width="0.6"/><polygon points="471.3,300.6 479.1,295.4 482.7,276.0 474.3,271.3 458.1,290.4 459.7,292.8 470.9,300.8" fill="#dc8ea6" stroke="#dc8ea6" stroke-width="0.6"/><polygon points="469.4,309.1 475.1,322.6 478.2,321.6 490.5,312.7 471.3,300.6 470.9,300.8" fill="#5a52d0" stroke="#5a52d0" stroke-width="0.6"/><polygon points="474.6,324.3 478.2,321.6 475.1,322.6" fill="#5a52d0" stroke="#5a52d0" stroke-width="0.6"/><polygon points="469.3,174.7 467.4,166.0 464.7,163.9 440.1,175.1 443.9,180.2 452.9,188.2" fill="#4a48c8" stroke="#4a48c8" stroke-width="0.6"/><polygon points="469.3,174.7 452.9,188.2 454.4,192.3 476.3,192.7 481.8,186.7" fill="#3f52c8" stroke="#3f52c8" stroke-width="0.6"/><polygon points="454.4,192.3 454.1,193.4 465.5,211.9 468.4,214.0 472.9,212.2 473.5,211.3 476.3,192.7" fill="#2b56c8" stroke="#2b56c8" stroke-width="0.6"/><polygon points="490.3,224.9 472.9,212.2 468.4,214.0 465.9,219.5 467.6,237.3" fill="#2b56c8" stroke="#2b56c8" stroke-width="0.6"/><polygon points="467.7,243.3 486.6,248.1 493.4,225.7 490.3,224.9 467.6,237.3 466.5,241.0" fill="#2b56c8" stroke="#2b56c8" stroke-width="0.6"/><polygon points="467.4,265.3 473.7,270.2 487.0,248.7 486.6,248.1 467.7,243.3 463.6,258.9" fill="#a58fd6" stroke="#a58fd6" stroke-width="0.6"/><polygon points="489.9,274.8 499.8,262.6 488.2,249.4 487.0,248.7 473.7,270.2 474.3,271.3 482.7,276.0" fill="#92aacb" stroke="#92aacb" stroke-width="0.6"/><polygon points="497.2,299.2 501.4,288.8 489.9,274.8 482.7,276.0 479.1,295.4" fill="#5a52d0" stroke="#5a52d0" stroke-width="0.6"/><polygon points="497.2,299.2 479.1,295.4 471.3,300.6 490.5,312.7 499.7,306.0" fill="#5a52d0" stroke="#5a52d0" stroke-width="0.6"/><polygon points="476.2,163.1 489.6,148.6 488.7,146.4 463.7,142.1 460.5,149.3 464.7,163.9 467.4,166.0" fill="#4a8fd0" stroke="#4a8fd0" stroke-width="0.6"/><polygon points="485.5,186.2 496.0,178.7 495.4,176.5 476.2,163.1 467.4,166.0 469.3,174.7 481.8,186.7" fill="#92aacb" stroke="#92aacb" stroke-width="0.6"/><polygon points="476.3,192.7 473.5,211.3 493.2,203.9 485.5,186.2 481.8,186.7" fill="#2b56c8" stroke="#2b56c8" stroke-width="0.6"/><polygon points="493.4,225.7 494.3,225.4 500.9,220.0 496.9,206.5 493.2,203.9 473.5,211.3 472.9,212.2 490.3,224.9" fill="#2b56c8" stroke="#2b56c8" stroke-width="0.6"/><polygon points="488.2,249.4 505.1,242.0 494.3,225.4 493.4,225.7 486.6,248.1 487.0,248.7" fill="#4a8fd0" stroke="#4a8fd0" stroke-width="0.6"/><polygon points="499.8,262.6 504.1,262.3 515.7,249.3 511.5,244.9 505.1,242.0 488.2,249.4" fill="#c8323f" stroke="#c8323f" stroke-width="0.6"/><polygon points="489.9,274.8 501.4,288.8 509.7,286.0 517.3,277.7 504.1,262.3 499.8,262.6" fill="#a3c83f" stroke="#a3c83f" stroke-width="0.6"/><polygon points="509.7,286.0 501.4,288.8 497.2,299.2 499.7,306.0 515.1,294.8" fill="#a58fd6" stroke="#a58fd6" stroke-width="0.6"/><polygon points="495.6,156.5 493.3,152.0 489.6,148.6 476.2,163.1 495.4,176.5" fill="#c43fa6" stroke="#c43fa6" stroke-width="0.6"/><polygon points="485.5,186.2 493.2,203.9 496.9,206.5 512.5,190.5 512.7,188.9 512.5,188.5 505.7,181.2 496.0,178.7" fill="#3048c0" stroke="#3048c0" stroke-width="0.6"/><polygon points="510.2,220.0 520.1,217.4 521.6,216.1 512.5,190.5 496.9,206.5 500.9,220.0" fill="#4a8fd0" stroke="#4a8fd0" stroke-width="0.6"/><polygon points="505.1,242.0 511.5,244.9 510.2,220.0 500.9,220.0 494.3,225.4" fill="#3fbf45" stroke="#3fbf45" stroke-width="0.6"/><polygon points="510.2,220.0 511.5,244.9 515.7,249.3 523.3,248.3 523.9,247.1 520.1,217.4" fill="#c8c844" stroke="#c8c844" stroke-width="0.6"/><polygon points="533.5,260.9 527.6,253.0 523.3,248.3 515.7,249.3 504.1,262.3 517.3,277.7 525.1,277.5" fill="#35b3a0" stroke="#35b3a0" stroke-width="0.6"/><polygon points="525.1,277.5 517.3,277.7 509.7,286.0 515.1,294.8 530.2,283.8" fill="#3f52c8" stroke="#3f52c8" stroke-width="0.6"/><polygon points="492.9,133.3 488.7,146.4 489.6,148.6 493.3,152.0 518.9,142.6 496.3,131.5" fill="#3fbf45" stroke="#3fbf45" stroke-width="0.6"/><polygon points="518.9,142.6 493.3,152.0 495.6,156.5 520.2,160.1 523.5,158.1 521.2,142.9" fill="#4a8fd0" stroke="#4a8fd0" stroke-width="0.6"/><polygon points="496.0,178.7 505.7,181.2 520.2,160.1 495.6,156.5 495.4,176.5" fill="#5a30b4" stroke="#5a30b4" stroke-width="0.6"/><polygon points="520.2,160.1 505.7,181.2 512.5,188.5 528.0,179.0 525.0,168.0 523.5,158.1" fill="#9090d0" stroke="#9090d0" stroke-width="0.6"/><polygon points="528.5,215.4 536.1,209.2 532.0,193.9 512.7,188.9 512.5,190.5 521.6,216.1" fill="#9090d0" stroke="#9090d0" stroke-width="0.6"/><polygon points="523.9,247.1 541.6,233.0 528.5,215.4 521.6,216.1 520.1,217.4" fill="#d38a50" stroke="#d38a50" stroke-width="0.6"/><polygon points="541.6,233.0 523.9,247.1 523.3,248.3 527.6,253.0 545.3,243.3 542.6,233.2" fill="#d38a50" stroke="#d38a50" stroke-width="0.6"/><polygon points="527.6,253.0 533.5,260.9 540.6,261.1 548.0,253.3 545.3,243.3" fill="#d38a50" stroke="#d38a50" stroke-width="0.6"/><polygon points="544.1,264.6 540.6,261.1 533.5,260.9 525.1,277.5 530.2,283.8 543.7,274.0" fill="#7a3fc4" stroke="#7a3fc4" stroke-width="0.6"/><polygon points="544.1,264.6 543.7,274.0 551.9,268.1" fill="#c8c844" stroke="#c8c844" stroke-width="0.6"/><polygon points="512.5,188.5 512.7,188.9 532.0,193.9 528.0,179.0" fill="#9090d0" stroke="#9090d0" stroke-width="0.6"/><polygon points="528.5,215.4 541.6,233.0 542.6,233.2 536.1,209.2" fill="#62d064" stroke="#62d064" stroke-width="0.6"/><polygon points="540.6,261.1 544.1,264.6 551.9,268.1 552.0,268.0 548.0,253.3" fill="#d2843f" stroke="#d2843f" stroke-width="0.6"/><polygon points="269.3,233.3 244.1,245.7 244.7,247.5 246.0,248.0 261.1,260.6 275.5,238.8 270.2,233.1" fill="#5a30b4" stroke="#5a30b4" stroke-width="0.6"/><polygon points="216.8,211.5 218.2,209.8 209.5,208.7 201.0,214.0 201.0,222.0" fill="#3fbf45" stroke="#3fbf45" stroke-width="0.6"/><polygon points="216.8,211.5 201.0,222.0 201.0,226.0 209.5,228.8" fill="#56c4b4" stroke="#56c4b4" stroke-width="0.6"/><polygon points="219.9,209.2 219.6,209.2 218.2,209.8 216.8,211.5 209.5,228.8 210.0,229.0 228.0,241.0 229.7,241.7 230.6,240.9 230.9,226.2" fill="#92aacb" stroke="#92aacb" stroke-width="0.6"/><polygon points="269.3,217.1 269.0,216.5 262.3,210.5 255.7,211.4 237.2,224.7 269.3,233.3 270.2,233.1" fill="#c07840" stroke="#c07840" stroke-width="0.6"/><polygon points="230.9,226.2 230.6,240.9 244.1,245.7 269.3,233.3 237.2,224.7" fill="#c07840" stroke="#c07840" stroke-width="0.6"/><polygon points="328.1,214.7 306.5,210.6 296.2,239.8 331.3,224.2" fill="#c8323f" stroke="#c8323f" stroke-width="0.6"/><polygon points="222.3,206.7 234.7,204.1 249.3,190.5 246.7,185.2 224.0,199.5" fill="#3f52c8" stroke="#3f52c8" stroke-width="0.6"/><polygon points="234.7,204.1 255.7,211.4 262.3,210.5 259.6,196.3 249.3,190.5" fill="#d8a070" stroke="#d8a070" stroke-width="0.6"/><polygon points="222.3,206.7 219.9,209.2 230.9,226.2 237.2,224.7 255.7,211.4 234.7,204.1" fill="#e09aa8" stroke="#e09aa8" stroke-width="0.6"/><polygon points="302.5,206.0 301.7,200.7 292.5,185.9 285.8,185.3 269.0,216.5 269.3,217.1" fill="#5a30b4" stroke="#5a30b4" stroke-width="0.6"/><polygon points="306.5,210.6 302.5,206.0 269.3,217.1 270.2,233.1 275.5,238.8 286.6,244.0 295.5,241.0 296.2,239.8" fill="#a040b0" stroke="#a040b0" stroke-width="0.6"/><polygon points="362.0,210.0 360.2,194.7 354.8,185.6 339.0,207.1 358.0,216.5" fill="#c234c6" stroke="#c234c6" stroke-width="0.6"/><polygon points="270.2,177.2 265.9,173.1 254.7,180.2" fill="#c49552" stroke="#c49552" stroke-width="0.6"/><polygon points="249.3,190.5 259.6,196.3 273.9,179.7 273.8,179.3 270.2,177.2 254.7,180.2 246.7,185.2" fill="#b860c8" stroke="#b860c8" stroke-width="0.6"/><polygon points="259.6,196.3 262.3,210.5 269.0,216.5 285.8,185.3 273.9,179.7" fill="#3f52c8" stroke="#3f52c8" stroke-width="0.6"/><polygon points="292.5,185.9 301.7,200.7 324.4,183.0 311.8,171.9 304.8,169.2 302.9,170.2" fill="#c8c844" stroke="#c8c844" stroke-width="0.6"/><polygon points="328.7,213.9 324.8,183.1 324.4,183.0 301.7,200.7 302.5,206.0 306.5,210.6 328.1,214.7" fill="#b02444" stroke="#b02444" stroke-width="0.6"/><polygon points="339.0,207.1 354.8,185.6 355.0,179.2 346.4,175.2 324.8,183.1 328.7,213.9" fill="#b02444" stroke="#b02444" stroke-width="0.6"/><polygon points="385.9,191.9 376.6,180.7 366.1,173.0 355.0,179.2 354.8,185.6 360.2,194.7 376.1,202.4" fill="#6d6fd0" stroke="#6d6fd0" stroke-width="0.6"/><polygon points="302.9,170.2 304.8,169.2 308.5,155.6 302.9,149.8 287.6,159.5" fill="#d2843f" stroke="#d2843f" stroke-width="0.6"/><polygon points="273.8,179.3 273.9,179.7 285.8,185.3 292.5,185.9 302.9,170.2 287.6,159.5 278.0,165.5" fill="#62d064" stroke="#62d064" stroke-width="0.6"/><polygon points="304.8,169.2 311.8,171.9 335.7,156.8 335.2,154.9 325.0,146.1 308.5,155.6" fill="#d2843f" stroke="#d2843f" stroke-width="0.6"/><polygon points="346.4,175.2 335.7,156.8 311.8,171.9 324.4,183.0 324.8,183.1" fill="#8f8fd4" stroke="#8f8fd4" stroke-width="0.6"/><polygon points="407.1,155.2 404.0,154.7 371.2,161.4 369.9,166.5 405.0,170.9 411.3,162.1" fill="#b860c8" stroke="#b860c8" stroke-width="0.6"/><polygon points="403.7,177.5 405.0,170.9 369.9,166.5 366.1,173.0 376.6,180.7" fill="#2b56c8" stroke="#2b56c8" stroke-width="0.6"/><polygon points="392.2,194.4 403.0,188.4 404.4,186.8 403.7,177.5 376.6,180.7 385.9,191.9" fill="#5f7fd2" stroke="#5f7fd2" stroke-width="0.6"/><polygon points="308.5,155.6 325.0,146.1 324.7,143.8 319.6,139.3 302.9,149.8" fill="#8f8fd4" stroke="#8f8fd4" stroke-width="0.6"/><polygon points="335.2,154.9 345.2,146.3 348.7,133.5 337.5,128.0 331.5,131.8 324.7,143.8 325.0,146.1" fill="#d8a070" stroke="#d8a070" stroke-width="0.6"/><polygon points="365.9,127.2 348.7,133.5 345.2,146.3 370.9,150.6 374.5,137.2" fill="#56c4b4" stroke="#56c4b4" stroke-width="0.6"/><polygon points="346.4,175.2 355.0,179.2 366.1,173.0 369.9,166.5 371.2,161.4 370.9,150.6 345.2,146.3 335.2,154.9 335.7,156.8" fill="#4a50c0" stroke="#4a50c0" stroke-width="0.6"/><polygon points="375.3,137.0 404.0,154.7 407.1,155.2 408.1,143.8 393.7,127.8" fill="#c88438" stroke="#c88438" stroke-width="0.6"/><polygon points="370.9,150.6 371.2,161.4 404.0,154.7 375.3,137.0 374.5,137.2" fill="#c88438" stroke="#c88438" stroke-width="0.6"/><polygon points="421.4,132.6 408.1,143.8 407.1,155.2 411.3,162.1 426.1,163.8 434.4,147.0 433.8,142.0 432.2,139.3" fill="#2b56c8" stroke="#2b56c8" stroke-width="0.6"/><polygon points="433.8,142.0 434.4,147.0 452.4,151.1 460.5,149.3 463.7,142.1 460.5,130.4" fill="#92aacb" stroke="#92aacb" stroke-width="0.6"/><polygon points="452.4,151.1 434.4,147.0 426.1,163.8 433.7,172.4 436.8,173.8 438.3,174.2" fill="#86c884" stroke="#86c884" stroke-width="0.6"/><polygon points="464.7,163.9 460.5,149.3 452.4,151.1 438.3,174.2 440.1,175.1" fill="#4a48c8" stroke="#4a48c8" stroke-width="0.6"/><polygon points="363.3,111.8 337.5,128.0 348.7,133.5 365.9,127.2" fill="#d2843f" stroke="#d2843f" stroke-width="0.6"/><polygon points="384.3,104.8 383.0,104.0 377.9,102.6 363.3,111.8 365.9,127.2 374.5,137.2 375.3,137.0 393.7,127.8 395.7,124.0" fill="#5f7fd2" stroke="#5f7fd2" stroke-width="0.6"/><polygon points="422.3,123.4 408.1,109.8 398.5,122.4 420.8,129.1" fill="#35b3a0" stroke="#35b3a0" stroke-width="0.6"/><polygon points="420.8,129.1 398.5,122.4 395.7,124.0 393.7,127.8 408.1,143.8 421.4,132.6" fill="#56c4b4" stroke="#56c4b4" stroke-width="0.6"/><polygon points="428.4,117.5 422.3,123.4 420.8,129.1 421.4,132.6 432.2,139.3 441.5,122.3" fill="#6d6fd0" stroke="#6d6fd0" stroke-width="0.6"/><polygon points="458.8,117.6 441.5,122.3 432.2,139.3 433.8,142.0 460.5,130.4 461.1,120.5" fill="#c8323f" stroke="#c8323f" stroke-width="0.6"/><polygon points="460.5,130.4 463.7,142.1 488.7,146.4 492.9,133.3 477.5,119.8 461.1,120.5" fill="#c03060" stroke="#c03060" stroke-width="0.6"/><polygon points="500.9,124.9 496.3,131.5 518.9,142.6 521.2,142.9 519.0,128.0 518.0,123.5" fill="#4a8fd0" stroke="#4a8fd0" stroke-width="0.6"/><polygon points="383.0,104.0 384.3,104.8 408.0,102.5 410.1,91.4 405.5,85.2 395.5,91.5" fill="#7a3fc4" stroke="#7a3fc4" stroke-width="0.6"/><polygon points="398.5,122.4 408.1,109.8 408.8,105.6 408.0,102.5 384.3,104.8 395.7,124.0" fill="#3f52c8" stroke="#3f52c8" stroke-width="0.6"/><polygon points="408.0,102.5 408.8,105.6 428.6,109.6 434.4,100.4 430.2,90.9 410.1,91.4" fill="#40b848" stroke="#40b848" stroke-width="0.6"/><polygon points="428.4,117.5 428.6,109.6 408.8,105.6 408.1,109.8 422.3,123.4" fill="#56c4b4" stroke="#56c4b4" stroke-width="0.6"/><polygon points="458.3,114.9 450.0,106.0 434.4,100.4 428.6,109.6 428.4,117.5 441.5,122.3 458.8,117.6" fill="#5a30b4" stroke="#5a30b4" stroke-width="0.6"/><polygon points="477.5,119.8 484.4,112.1 486.8,98.1 484.6,97.5 465.5,103.0 458.3,114.9 458.8,117.6 461.1,120.5" fill="#7a3fc4" stroke="#7a3fc4" stroke-width="0.6"/><polygon points="506.2,103.7 486.8,98.1 484.4,112.1 500.0,114.9" fill="#3f52c8" stroke="#3f52c8" stroke-width="0.6"/><polygon points="500.9,124.9 500.0,114.9 484.4,112.1 477.5,119.8 492.9,133.3 496.3,131.5" fill="#2b56c8" stroke="#2b56c8" stroke-width="0.6"/><polygon points="518.0,123.5 514.0,106.0 506.2,103.7 500.0,114.9 500.9,124.9" fill="#b860c8" stroke="#b860c8" stroke-width="0.6"/><polygon points="383.0,104.0 395.5,91.5 377.9,102.6" fill="#5f7fd2" stroke="#5f7fd2" stroke-width="0.6"/><polygon points="410.1,91.4 430.2,90.9 434.5,83.1 417.0,78.0 405.5,85.2" fill="#3f52c8" stroke="#3f52c8" stroke-width="0.6"/><polygon points="434.4,100.4 450.0,106.0 452.0,88.1 434.5,83.1 430.2,90.9" fill="#3fbf45" stroke="#3fbf45" stroke-width="0.6"/><polygon points="450.0,106.0 458.3,114.9 465.5,103.0 465.9,92.1 452.0,88.1" fill="#c49552" stroke="#c49552" stroke-width="0.6"/><polygon points="465.5,103.0 484.6,97.5 465.9,92.1" fill="#d2843f" stroke="#d2843f" stroke-width="0.6"/><polygon points="183.0,221.0 417.0,71.0 523.0,101.0 523.0,128.0 383.0,196.0 261.0,258.0 223.0,246.0" fill="#000" opacity="0.17"/></g></g><line x1="75.6" y1="216.0" x2="424.0" y2="25.0" stroke="#fff" stroke-width="1.3"/><line x1="424.0" y1="25.0" x2="722.5" y2="113.0" stroke="#fff" stroke-width="1.3"/><line x1="722.5" y1="113.0" x2="737.3" y2="340.6" stroke="#fff" stroke-width="1.3"/><line x1="75.6" y1="216.0" x2="171.7" y2="404.5" stroke="#fff" stroke-width="1.3"/><line x1="75.6" y1="216.0" x2="300.8" y2="405.0" stroke="#fff" stroke-width="1.3"/><line x1="300.8" y1="405.0" x2="722.5" y2="113.0" stroke="#fff" stroke-width="1.3"/><line x1="300.8" y1="405.0" x2="378.5" y2="601.3" stroke="#fff" stroke-width="1.3"/><line x1="171.7" y1="404.5" x2="365.8" y2="601.5" stroke="#fff" stroke-width="1.3"/><line x1="737.3" y1="340.6" x2="399.6" y2="620.6" stroke="#fff" stroke-width="1.3"/><polygon points="169.0,295.0 551.5,62.7 585.5,267.4 264.6,499.6" fill="none" stroke="#e4000a" stroke-width="1.8" stroke-linejoin="round"/><line x1="409.8" y1="279.0" x2="548.5" y2="360.8" stroke="#fff" stroke-width="2.1"/><defs><radialGradient id="sph" cx="40%" cy="35%" r="70%"><stop offset="0" stop-color="#fff"/><stop offset="1" stop-color="#a9a9a9"/></radialGradient></defs><circle cx="409.8" cy="279.0" r="4.4" fill="url(#sph)"/><polygon points="547.5,359.6 554.5,358.8 552.0,369.8" fill="#4a4a4a"/><ellipse cx="554.7" cy="364.8" rx="3.7" ry="6" transform="rotate(28 554.7 364.8)" fill="#bdbdbd"/><line x1="81.8" y1="502.0" x2="75.2" y2="479.0" stroke="#1fd631" stroke-width="1.3"/><polygon points="74.2,475.4 72.6,481.6 77.8,480.4" fill="#1fd631"/><line x1="81.8" y1="502.0" x2="68.5" y2="494.0" stroke="#e01818" stroke-width="1.3"/><circle cx="67.6" cy="493.4" r="2.2" fill="#c00c0c"/><line x1="81.8" y1="502.0" x2="61.0" y2="516.2" stroke="#f0e010" stroke-width="1.3"/><polygon points="56.8,519.0 62.4,517.8 60.0,513.6" fill="#f4f000"/><text x="78.2" y="477.2" font-family="Liberation Sans, sans-serif" font-size="10.5" font-style="italic" font-weight="700" fill="#000" opacity="0.75">Z</text><text x="77.5" y="476.5" font-family="Liberation Sans, sans-serif" font-size="10.5" font-style="italic" font-weight="700" fill="#fff">Z</text><text x="72.2" y="489.2" font-family="Liberation Sans, sans-serif" font-size="10.5" font-style="italic" font-weight="700" fill="#000" opacity="0.75">X</text><text x="71.5" y="488.5" font-family="Liberation Sans, sans-serif" font-size="10.5" font-style="italic" font-weight="700" fill="#fff">X</text><text x="65.7" y="511.2" font-family="Liberation Sans, sans-serif" font-size="10.5" font-style="italic" font-weight="700" fill="#000" opacity="0.75">Y</text><text x="65.0" y="510.5" font-family="Liberation Sans, sans-serif" font-size="10.5" font-style="italic" font-weight="700" fill="#fff">Y</text></svg>
<div style="left:1139px;top:22px;width:2px;height:840px;background:#1f5c98;"></div>
<div style="left:1141px;top:22px;width:329px;height:840px;background:#2f3436;"></div>
<div style="left:1141px;top:22px;width:328px;height:28px;background:#000;"></div>
<div style="left:1141px;top:22px;width:139px;height:28px;background:#2f3436;"></div>
<div style="left:1141px;top:22px;width:139px;height:2px;background:#fff;"></div>
<div style="left:1280px;top:22px;width:100px;height:28px;background:#1c1c1f;"></div>
<span class="t" style="left:1148.50px;top:30.00px;font-size:11.25px;line-height:16px;color:#fff;font-weight:700;-webkit-text-stroke:0;letter-spacing:0.045px;">Render Properties</span>
<svg style="left:1256px;top:31px;" width="15" height="15" viewBox="0 0 15 15"><path d="M2.95 2.80L11.75 11.20M11.75 2.80L2.95 11.20" stroke="#6cc6fa" stroke-width="2.0" fill="none"/></svg>
<span class="t" style="left:1290.30px;top:28.00px;font-size:12px;line-height:16px;color:#fff;letter-spacing:0.045px;">Data Structure</span>
<svg style="left:1397px;top:33px;" width="10" height="7" viewBox="0 0 10 7"><path d="M0.2 1 L8.4 1 L4.3 5.7Z" fill="#e8e8e8"/></svg><svg style="left:1421px;top:30px;" width="15" height="13" viewBox="0 0 15 13"><rect x="0" y="0.5" width="9.1" height="6.8" fill="#9cc8f8"/><path d="M11.1 4.9 H14.1 V12 H5.2 V8.7 H11.1Z" fill="#8fc2f8"/></svg><svg style="left:1447px;top:28px;" width="15" height="15" viewBox="0 0 15 15"><path d="M3.45 3.90L12.25 11.90M12.25 3.90L3.45 11.90" stroke="#6cc6fa" stroke-width="2.0" fill="none"/></svg>
<div style="left:1143px;top:52px;width:157px;height:24px;background:#1e5a91;"></div>
<svg style="left:1151px;top:57px;" width="15" height="12" viewBox="0 0 15 12"><path d="M1.40 3.50 L6.90 10.10 L12.40 3.50" stroke="#79b7f4" stroke-width="1.7" fill="none"/></svg>
<span class="t" style="left:1174.00px;top:55.00px;font-size:12.75px;line-height:17px;color:#f4f4f4;letter-spacing:-0.031px;">Visualization Browser</span>
<div style="left:1143px;top:96px;width:324px;height:1px;background:#484c4e;"></div>
<div style="left:1143px;top:117px;width:324px;height:1px;background:#484c4e;"></div>
<svg style="left:1147px;top:80px;" width="15" height="12" viewBox="0 0 15 12"><path d="M1.70 4.20 L6.10 9.60 L10.50 4.20" stroke="#79b7f4" stroke-width="1.6" fill="none"/></svg>
<svg style="left:1170px;top:84px;" width="16" height="11" viewBox="0 0 16 11"><g transform="translate(0.40 1.40)" stroke="#6cc6fa" stroke-width="1.7" fill="none"><path d="M0.9 0.9 Q6.7 8.6 12.5 0.9"/><path d="M2.9 3.6 L1.0 5.9 M6.7 4.9 L6.7 7.6 M10.5 3.6 L12.4 5.9"/></g></svg>
<span class="t" style="left:1197.80px;top:79.00px;font-size:12.25px;line-height:17px;color:#f4f4f4;font-weight:700;-webkit-text-stroke:0;font-style:italic;letter-spacing:-0.122px;">(08) Small IN100 Full Reconstruction</span>
<svg style="left:1168px;top:101px;" width="15" height="12" viewBox="0 0 15 12"><path d="M0.90 4.00 L5.30 9.40 L9.70 4.00" stroke="#79b7f4" stroke-width="1.6" fill="none"/></svg>
<svg style="left:1190px;top:105px;" width="16" height="11" viewBox="0 0 16 11"><g transform="translate(0.30 1.50)" stroke="#6cc6fa" stroke-width="1.7" fill="none"><path d="M0.9 0.9 Q6.7 8.6 12.5 0.9"/><path d="M2.9 3.6 L1.0 5.9 M6.7 4.9 L6.7 7.6 M10.5 3.6 L12.4 5.9"/></g></svg>
<span class="t" style="left:1217.20px;top:100.00px;font-size:12.25px;line-height:17px;color:#f4f4f4;font-weight:700;-webkit-text-stroke:0;letter-spacing:0.051px;">DataContainer</span>
<div style="left:1143px;top:118px;width:324px;height:20px;background:#1e5a91;"></div>
<svg style="left:1210px;top:122px;" width="16" height="12" viewBox="0 0 16 12"><g transform="translate(0.30 6.40)"><path d="M0.8 0 Q6.75 -8.2 12.7 0 Q6.75 8.2 0.8 0Z" stroke="#6cc6fa" stroke-width="1.5" fill="none"/><circle cx="6.75" cy="0" r="1.6" fill="#6cc6fa"/></g></svg>
<span class="t" style="left:1237.00px;top:121.00px;font-size:12.25px;line-height:17px;color:#f4f4f4;font-weight:700;-webkit-text-stroke:0;letter-spacing:-0.160px;">Clip</span>
<div style="left:1143px;top:138px;width:324px;height:1px;background:#5b6063;"></div>
<div style="left:1143px;top:139px;width:324px;height:17px;background:#000;"></div>
<div style="left:1143px;top:183px;width:324px;height:177px;background:#000;"></div>
<div style="left:1143px;top:156px;width:324px;height:3px;background:#1e5a91;"></div>
<div style="left:1143px;top:156px;width:169px;height:27px;background:#1e5a91;"></div>
<svg style="left:1151px;top:164px;" width="15" height="12" viewBox="0 0 15 12"><path d="M1.40 3.50 L6.90 10.10 L12.40 3.50" stroke="#79b7f4" stroke-width="1.7" fill="none"/></svg>
<span class="t" style="left:1174.00px;top:162.00px;font-size:12.75px;line-height:17px;color:#f4f4f4;letter-spacing:-0.021px;">Visualization Properties</span>
<span class="t" style="left:1147.30px;top:191.00px;font-size:12.25px;line-height:17px;color:#f4f4f4;letter-spacing:-0.325px;">Clip Type:</span>
<div style="left:1203px;top:188px;width:260px;height:20px;background:#1c1c1f;border-radius:3px;"></div>
<span class="t" style="left:1217.20px;top:189.00px;font-size:12.25px;line-height:17px;color:#f4f4f4;letter-spacing:-0.469px;">Plane</span>
<svg style="left:1440px;top:196px;" width="10" height="6" viewBox="0 0 10 6"><path d="M0.2 0.6 L8.4 0.6 L4.3 5.2Z" fill="#ececec"/></svg>
<div style="left:1147px;top:215px;width:16px;height:16px;background:#9cc7f7;border-radius:3px;box-shadow:inset 0 0 0 1px #3d8fe6;"></div>
<span class="t" style="left:1167.90px;top:216.00px;font-size:11.75px;line-height:16px;color:#f4f4f4;letter-spacing:-0.036px;">Inside Out</span>
<div style="left:1147px;top:238px;width:16px;height:16px;background:#9cc7f7;border-radius:3px;box-shadow:inset 0 0 0 1px #3d8fe6;"><svg style="left:0px;top:0px;" width="16" height="16" viewBox="0 0 16 16"><path d="M3.7 8.3 L6.5 10.9 L12.3 5.3" stroke="#000" stroke-width="2.1" fill="none"/></svg></div>
<span class="t" style="left:1167.90px;top:238.00px;font-size:11.25px;line-height:16px;color:#f4f4f4;letter-spacing:0.035px;">Show Plane</span>
<span class="t" style="left:1148.00px;top:267.00px;font-size:12.25px;line-height:17px;color:#f4f4f4;letter-spacing:-0.042px;">Normal:</span>
<div style="left:1196px;top:260px;width:84px;height:28px;background:#1c1c1f;border-radius:3px;"></div><span class="t" style="left:1198.80px;top:267.00px;font-size:12.25px;line-height:17px;color:#f4f4f4;letter-spacing:-0.261px;">1.00</span>
<div style="left:1286px;top:260px;width:84px;height:28px;background:#1c1c1f;border-radius:3px;"></div><span class="t" style="left:1287.90px;top:267.00px;font-size:12.25px;line-height:17px;color:#f4f4f4;letter-spacing:-0.136px;">0.00</span>
<div style="left:1376px;top:260px;width:85px;height:28px;background:#1c1c1f;border-radius:3px;"></div><span class="t" style="left:1378.00px;top:267.00px;font-size:12.25px;line-height:17px;color:#f4f4f4;letter-spacing:-0.136px;">0.00</span>
<span class="t" style="left:1148.00px;top:301.00px;font-size:12.25px;line-height:17px;color:#f4f4f4;letter-spacing:-0.013px;">Origin:</span>
<div style="left:1196px;top:294px;width:84px;height:28px;background:#1c1c1f;border-radius:3px;"></div><span class="t" style="left:1198.00px;top:301.00px;font-size:12.25px;line-height:17px;color:#f4f4f4;letter-spacing:-0.122px;">-23.38</span>
<div style="left:1286px;top:294px;width:84px;height:28px;background:#1c1c1f;border-radius:3px;"></div><span class="t" style="left:1287.90px;top:301.00px;font-size:12.25px;line-height:17px;color:#f4f4f4;letter-spacing:-0.131px;">25.13</span>
<div style="left:1376px;top:294px;width:85px;height:28px;background:#1c1c1f;border-radius:3px;"></div><span class="t" style="left:1377.50px;top:301.00px;font-size:12.25px;line-height:17px;color:#f4f4f4;letter-spacing:-0.006px;">-14.38</span>
<div style="left:1143px;top:332px;width:105px;height:24px;background:#0b253f;border-radius:3px;"></div><span class="t" style="left:1180.20px;top:337.00px;font-size:12.25px;line-height:17px;color:#b4babf;letter-spacing:-0.091px;">Apply</span>
<div style="left:1252px;top:332px;width:106px;height:24px;background:#3b3f40;border-radius:3px;"></div><span class="t" style="left:1290.40px;top:337.00px;font-size:12.25px;line-height:17px;color:#8d9194;letter-spacing:-0.523px;">Reset</span>
<div style="left:1362px;top:332px;width:105px;height:24px;background:#585c5e;border-radius:3px;"></div><span class="t" style="left:1396.80px;top:337.00px;font-size:12.25px;line-height:17px;color:#ffffff;letter-spacing:-0.037px;">Delete</span>
<div style="left:1143px;top:360px;width:324px;height:3px;background:#1e5a91;"></div>
<div style="left:1143px;top:360px;width:127px;height:27px;background:#1e5a91;"></div>
<svg style="left:1151px;top:369px;" width="15" height="12" viewBox="0 0 15 12"><path d="M1.40 2.70 L6.90 9.30 L12.40 2.70" stroke="#79b7f4" stroke-width="1.7" fill="none"/></svg>
<span class="t" style="left:1173.80px;top:366.00px;font-size:12.75px;line-height:17px;color:#f4f4f4;letter-spacing:-0.026px;">Display Settings</span>
<div style="left:1144px;top:389px;width:155px;height:26px;background:#2f3436;border-left:1px solid #43474a;"></div>
<div style="left:1145px;top:387px;width:154px;height:2px;background:#fff;"></div>
<div style="left:1299px;top:388px;width:168px;height:27px;background:#1c1c1f;"></div>
<div style="left:1453px;top:415px;width:14px;height:446px;background:#000;"></div>
<span class="t" style="left:1193.30px;top:395.00px;font-size:11.5px;line-height:16px;color:#f4f4f4;font-weight:700;-webkit-text-stroke:0;letter-spacing:-0.009px;">Properties</span>
<span class="t" style="left:1344.30px;top:396.00px;font-size:12px;line-height:16px;color:#f4f4f4;letter-spacing:0.179px;">Information</span>
<div style="left:1456px;top:390px;width:8px;height:341px;background:#2a2c2e;border-radius:4px;"></div>
<span class="t" style="left:1147.40px;top:423.00px;font-size:12.25px;line-height:17px;color:#f4f4f4;letter-spacing:-0.213px;">Representation:</span>
<div style="left:1251px;top:419px;width:198px;height:22px;background:#1c1c1f;border-radius:4px;border:1px solid #2377cf;"></div>
<span class="t" style="left:1265.00px;top:422.00px;font-size:12.25px;line-height:17px;color:#f4f4f4;letter-spacing:-0.403px;">Surface</span>
<svg style="left:1425.8px;top:428px;" width="10" height="6" viewBox="0 0 10 6"><path d="M0.2 0.6 L8.4 0.6 L4.3 5.2Z" fill="#ececec"/></svg>
<span class="t" style="left:1149.90px;top:451.00px;font-size:11.25px;line-height:16px;color:#f4f4f4;font-weight:700;-webkit-text-stroke:0;letter-spacing:0.019px;">Coloring</span><div style="left:1147px;top:469px;width:302px;height:1px;background:#2377cf;"></div>
<div style="left:1147px;top:478px;width:195px;height:21px;background:#1c1c1f;border-radius:3px;"></div>
<svg style="left:1165px;top:482px;" width="11" height="12" viewBox="0 0 11 12"><path d="M5.3 0.5 L10.3 2.9 L10.3 8 L5.3 10.5 L0.3 8 L0.3 2.9Z" fill="#9cc8f8"/><path d="M0.6 3.1 L5.3 5.4 L10 3.1 M5.3 5.4 L5.3 10.2" stroke="#1c1c1f" stroke-width="0.9" fill="none"/></svg>
<span class="t" style="left:1181.20px;top:480.00px;font-size:12.25px;line-height:17px;color:#f4f4f4;letter-spacing:-0.274px;">IPFColors</span>
<svg style="left:1318.4px;top:486px;" width="10" height="6" viewBox="0 0 10 6"><path d="M0.2 0.6 L8.4 0.6 L4.3 5.2Z" fill="#ececec"/></svg>
<div style="left:1352px;top:478px;width:97px;height:21px;background:#1c1c1f;border-radius:3px;"></div>
<span class="t" style="left:1366.20px;top:480.00px;font-size:12.25px;line-height:17px;color:#f4f4f4;letter-spacing:-0.102px;">Magnitude</span>
<svg style="left:1426.7px;top:486px;" width="10" height="6" viewBox="0 0 10 6"><path d="M0.2 0.6 L8.4 0.6 L4.3 5.2Z" fill="#ececec"/></svg>
<div style="left:1147px;top:510px;width:94px;height:24px;background:#3b3f40;border-radius:3px;"></div><span class="t" style="left:1179.80px;top:515.00px;font-size:12.25px;line-height:17px;color:#85898c;letter-spacing:-0.418px;">Edit...</span>
<div style="left:1251px;top:510px;width:94px;height:24px;background:#585c5e;border-radius:3px;"></div><span class="t" style="left:1278.20px;top:515.00px;font-size:12.25px;line-height:17px;color:#ffffff;letter-spacing:-0.229px;">Invert...</span>
<div style="left:1355px;top:510px;width:94px;height:24px;background:#585c5e;border-radius:3px;"></div><span class="t" style="left:1381.00px;top:515.00px;font-size:12.25px;line-height:17px;color:#ffffff;letter-spacing:-0.458px;">Preset...</span>
<span class="t" style="left:1149.90px;top:544.00px;font-size:11.25px;line-height:16px;color:#f4f4f4;font-weight:700;-webkit-text-stroke:0;letter-spacing:-0.110px;">Scalar Coloring</span><div style="left:1147px;top:562px;width:302px;height:1px;background:#2377cf;"></div>
<span class="t" style="left:1147.40px;top:575.00px;font-size:12.25px;line-height:17px;color:#f4f4f4;letter-spacing:-0.490px;">Map Scalars:</span>
<div style="left:1251px;top:571px;width:198px;height:21px;background:#1c1c1f;border-radius:3px;"></div>
<span class="t" style="left:1265.00px;top:574.00px;font-size:12.25px;line-height:17px;color:#f4f4f4;letter-spacing:-0.095px;">Non-Colors</span>
<svg style="left:1425.8px;top:579px;" width="10" height="6" viewBox="0 0 10 6"><path d="M0.2 0.6 L8.4 0.6 L4.3 5.2Z" fill="#ececec"/></svg>
<span class="t" style="left:1149.90px;top:603.00px;font-size:11.25px;line-height:16px;color:#f4f4f4;font-weight:700;-webkit-text-stroke:0;letter-spacing:-0.017px;">Styling</span><div style="left:1147px;top:621px;width:302px;height:1px;background:#2377cf;"></div>
<span class="t" style="left:1147.40px;top:636.00px;font-size:12.25px;line-height:17px;color:#f4f4f4;letter-spacing:-0.388px;">Point Size:</span>
<div style="left:1215px;top:633px;width:65px;height:20px;background:#1c1c1f;border-radius:3px;"></div><span class="t" style="left:1218.00px;top:635.00px;font-size:13px;line-height:17px;color:#f4f4f4;">1</span>
<div style="left:1294px;top:635.5px;width:15px;height:15px;background:#9cc7f7;border-radius:3px;box-shadow:inset 0 0 0 1px #3d8fe6;"></div>
<span class="t" style="left:1314.20px;top:635.00px;font-size:11.5px;line-height:16px;color:#f4f4f4;letter-spacing:-0.010px;">Render Points as Spheres</span>
<span class="t" style="left:1147.40px;top:672.00px;font-size:12.25px;line-height:17px;color:#f4f4f4;letter-spacing:-0.581px;">Line Size:</span>
<div style="left:1209px;top:669px;width:86px;height:20px;background:#1c1c1f;border-radius:3px;"></div><span class="t" style="left:1211.60px;top:671.00px;font-size:13px;line-height:17px;color:#f4f4f4;">1</span>
<div style="left:1309px;top:671.5px;width:15px;height:15px;background:#9cc7f7;border-radius:3px;box-shadow:inset 0 0 0 1px #3d8fe6;"></div>
<span class="t" style="left:1329.00px;top:671.00px;font-size:11.5px;line-height:16px;color:#f4f4f4;letter-spacing:-0.013px;">Render Lines as Tubes</span>
<span class="t" style="left:1147.40px;top:703.00px;font-size:12.25px;line-height:17px;color:#f4f4f4;letter-spacing:-0.117px;">Opacity:</span>
<div style="left:1254px;top:708px;width:178px;height:3px;background:#2f86ea;border-radius:1.5px;"></div>
<div style="left:1431px;top:702px;width:15px;height:15px;background:#fff;border-radius:50%;"></div>
<span class="t" style="left:1147.40px;top:736.00px;font-size:12.25px;line-height:17px;color:#f4f4f4;letter-spacing:-0.475px;">Subsampling</span>
<div style="left:1251px;top:728px;width:198px;height:30px;background:#4b4b4b;border:1px solid #101010;"></div>
<svg style="left:1435px;top:735px;" width="9" height="18" viewBox="0 0 9 18"><path d="M0.2 5.2 L4.3 0.8 L8.4 5.2Z" fill="#ececec"/><path d="M0.6 13 L4.3 17 L8 13Z" fill="#777"/></svg>
<span class="t" style="left:1150.20px;top:768.00px;font-size:11.25px;line-height:16px;color:#f4f4f4;font-weight:700;-webkit-text-stroke:0;letter-spacing:-0.155px;">Local Transform</span>
<div style="left:1147px;top:786px;width:302px;height:1px;background:#2377cf;"></div>
<span class="t" style="left:1147.40px;top:801.00px;font-size:12.25px;line-height:17px;color:#f4f4f4;letter-spacing:-0.187px;">Translation:</span>
<div style="left:1215px;top:798px;width:73px;height:20px;background:#1c1c1f;border-radius:3px;"></div><span class="t" style="left:1217.20px;top:800.00px;font-size:13px;line-height:17px;color:#f4f4f4;">0</span>
<div style="left:1294px;top:798px;width:73px;height:20px;background:#1c1c1f;border-radius:3px;"></div><span class="t" style="left:1296.00px;top:800.00px;font-size:13px;line-height:17px;color:#f4f4f4;">0</span>
<div style="left:1373px;top:798px;width:73px;height:20px;background:#1c1c1f;border-radius:3px;"></div><span class="t" style="left:1375.20px;top:800.00px;font-size:13px;line-height:17px;color:#f4f4f4;">0</span>
<span class="t" style="left:1147.40px;top:827.00px;font-size:12.25px;line-height:17px;color:#f4f4f4;letter-spacing:-0.708px;">Scale:</span>
<div style="left:1215px;top:824px;width:73px;height:20px;background:#1c1c1f;border-radius:3px;"></div><span class="t" style="left:1217.20px;top:826.00px;font-size:13px;line-height:17px;color:#f4f4f4;">1</span>
<div style="left:1294px;top:824px;width:73px;height:20px;background:#1c1c1f;border-radius:3px;"></div><span class="t" style="left:1296.00px;top:826.00px;font-size:13px;line-height:17px;color:#f4f4f4;">1</span>
<div style="left:1373px;top:824px;width:73px;height:20px;background:#1c1c1f;border-radius:3px;"></div><span class="t" style="left:1375.20px;top:826.00px;font-size:13px;line-height:17px;color:#f4f4f4;">1</span>
<span class="t" style="left:1147.40px;top:853.00px;font-size:12.25px;line-height:17px;color:#f4f4f4;letter-spacing:0.023px;">Orientation:</span>
<div style="left:1215px;top:850px;width:73px;height:20px;background:#1c1c1f;border-radius:3px;"></div><span class="t" style="left:1217.20px;top:852.00px;font-size:13px;line-height:17px;color:#f4f4f4;">0</span>
<div style="left:1294px;top:850px;width:73px;height:20px;background:#1c1c1f;border-radius:3px;"></div><span class="t" style="left:1296.00px;top:852.00px;font-size:13px;line-height:17px;color:#f4f4f4;">0</span>
<div style="left:1373px;top:850px;width:73px;height:20px;background:#1c1c1f;border-radius:3px;"></div><span class="t" style="left:1375.20px;top:852.00px;font-size:13px;line-height:17px;color:#f4f4f4;">0</span>
<div style="left:1px;top:688px;width:1138px;height:2px;background:#1f5c98;"></div>
<div style="left:1px;top:690px;width:1138px;height:172px;background:#2f3436;"></div>
<div style="left:1px;top:690px;width:1138px;height:28px;background:#000;"></div>
<div style="left:1px;top:690px;width:100px;height:28px;background:#1c1c1f;"></div>
<div style="left:101px;top:690px;width:100px;height:28px;background:#2f3436;"></div>
<div style="left:101px;top:690px;width:100px;height:2px;background:#fff;"></div>
<span class="t" style="left:34.30px;top:696.00px;font-size:11.25px;line-height:16px;color:#fff;letter-spacing:-0.119px;">Issues</span>
<span class="t" style="left:118.80px;top:698.00px;font-size:11.75px;line-height:16px;color:#fff;font-weight:700;-webkit-text-stroke:0;letter-spacing:0.033px;">Output</span>
<svg style="left:177px;top:699px;" width="15" height="15" viewBox="0 0 15 15"><path d="M2.75 2.80L11.55 11.20M11.55 2.80L2.75 11.20" stroke="#6cc6fa" stroke-width="2.0" fill="none"/></svg>
<svg style="left:1067px;top:701px;" width="10" height="7" viewBox="0 0 10 7"><path d="M0.2 1 L8.4 1 L4.3 5.7Z" fill="#e8e8e8"/></svg><svg style="left:1091px;top:698px;" width="15" height="13" viewBox="0 0 15 13"><rect x="0" y="0.5" width="9.1" height="6.8" fill="#9cc8f8"/><path d="M11.1 4.9 H14.1 V12 H5.2 V8.7 H11.1Z" fill="#8fc2f8"/></svg><svg style="left:1117px;top:696px;" width="15" height="15" viewBox="0 0 15 15"><path d="M3.45 3.90L12.25 11.90M12.25 3.90L3.45 11.90" stroke="#6cc6fa" stroke-width="2.0" fill="none"/></svg>
<div style="left:29px;top:718px;width:1108px;height:143px;background:#000;border-top:1px solid #3a3e40;border-top-left-radius:4px;border-bottom-left-radius:4px;"><span class="t" style="left:5.20px;top:-2.00px;font-size:11px;line-height:14px;color:#dedede;font-family:'Liberation Mono', monospace;-webkit-text-stroke:0;letter-spacing:0.571px;">[2023:02:20 09:29:20] [18/22] Fill Bad Data: Ending Execution...</span><span class="t" style="left:5.20px;top:12.00px;font-size:11px;line-height:14px;color:#dedede;font-family:'Liberation Mono', monospace;-webkit-text-stroke:0;letter-spacing:0.571px;">[2023:02:20 09:29:20] [19/22] Erode/Dilate Bad Data: Starting Execution...</span><span class="t" style="left:5.20px;top:26.00px;font-size:11px;line-height:14px;color:#dedede;font-family:'Liberation Mono', monospace;-webkit-text-stroke:0;letter-spacing:0.571px;">[2023:02:20 09:29:21] [19/22] Erode/Dilate Bad Data: Ending Execution...</span><span class="t" style="left:5.20px;top:40.00px;font-size:11px;line-height:14px;color:#dedede;font-family:'Liberation Mono', monospace;-webkit-text-stroke:0;letter-spacing:0.571px;">[2023:02:20 09:29:21] [20/22] Erode/Dilate Bad Data: Starting Execution...</span><span class="t" style="left:5.20px;top:54.00px;font-size:11px;line-height:14px;color:#dedede;font-family:'Liberation Mono', monospace;-webkit-text-stroke:0;letter-spacing:0.571px;">[2023:02:20 09:29:22] [20/22] Erode/Dilate Bad Data: Ending Execution...</span><span class="t" style="left:5.20px;top:68.00px;font-size:11px;line-height:14px;color:#dedede;font-family:'Liberation Mono', monospace;-webkit-text-stroke:0;letter-spacing:0.571px;">[2023:02:20 09:29:22] [21/22] Generate IPF Colors: Starting Execution...</span><span class="t" style="left:5.20px;top:82.00px;font-size:11px;line-height:14px;color:#dedede;font-family:'Liberation Mono', monospace;-webkit-text-stroke:0;letter-spacing:0.571px;">[2023:02:20 09:29:22] [21/22] Generate IPF Colors: Ending Execution...</span><span class="t" style="left:5.20px;top:96.00px;font-size:11px;line-height:14px;color:#dedede;font-family:'Liberation Mono', monospace;-webkit-text-stroke:0;letter-spacing:0.571px;">[2023:02:20 09:29:22] [22/22] Write DREAM3D NX File (V8): Starting Execution...</span><span class="t" style="left:5.20px;top:110.00px;font-size:11px;line-height:14px;color:#dedede;font-family:'Liberation Mono', monospace;-webkit-text-stroke:0;letter-spacing:0.571px;">[2023:02:20 09:29:22] [22/22] Write DREAM3D NX File (V8): Ending Execution...</span><span class="t" style="left:5.20px;top:124.00px;font-size:11px;line-height:14px;color:#dedede;font-family:'Liberation Mono', monospace;-webkit-text-stroke:0;letter-spacing:0.571px;">[2023:02:20 09:29:22] (08) Small IN100 Full Reconstruction: Execute Complete</span></div>
<div style="left:1127px;top:838px;width:7px;height:20px;background:#29292b;border-radius:3.5px;"></div>
<svg style="left:9px;top:727px;" width="12" height="11" viewBox="0 0 12 11"><path d="M0.6 1.4H10.6M0.6 5H6.2M0.6 8.6H4.6" stroke="#6cc6fa" stroke-width="1.7" fill="none"/><path d="M6.6 5.6 L10.8 9.8 M10.8 5.6 L6.6 9.8" stroke="#6cc6fa" stroke-width="1.4" fill="none"/></svg>
<svg style="left:10px;top:753px;" width="10" height="10" viewBox="0 0 10 10"><path d="M1 1 H7 L9 3 V9 H1Z" stroke="#6cc6fa" stroke-width="1.4" fill="none" stroke-linejoin="round"/><rect x="3" y="5.4" width="4" height="2.4" fill="#6cc6fa"/><path d="M3 1.4 H6.4" stroke="#6cc6fa" stroke-width="1.6"/></svg>
<div style="left:1px;top:861px;width:1468px;height:2px;background:#2f3436;"></div>
<div style="left:1px;top:863px;width:1468px;height:25px;background:#1c1d1f;"></div>
<div style="left:760px;top:864px;width:1px;height:24px;background:#2c2f31;"></div>
<div style="left:837px;top:864px;width:1px;height:24px;background:#2c2f31;"></div>
<div style="left:762px;top:866px;width:74px;height:20px;background:#1e5a91;border-radius:3px;"></div>
<span class="t" style="left:779.90px;top:868.00px;font-size:11.25px;line-height:16px;color:#fff;letter-spacing:-0.229px;">Pipeline</span>
<div style="left:840px;top:864px;width:1px;height:24px;background:#2c2f31;"></div>
<div style="left:917px;top:864px;width:1px;height:24px;background:#2c2f31;"></div>
<div style="left:842px;top:866px;width:74px;height:20px;background:#1e5a91;border-radius:3px;"></div>
<span class="t" style="left:856.50px;top:868.00px;font-size:11.25px;line-height:16px;color:#fff;letter-spacing:-0.058px;">Filter List</span>
<div style="left:920px;top:864px;width:1px;height:24px;background:#2c2f31;"></div>
<div style="left:1009px;top:864px;width:1px;height:24px;background:#2c2f31;"></div>
<div style="left:922px;top:866px;width:86px;height:20px;background:#1e5a91;border-radius:3px;"></div>
<span class="t" style="left:929.50px;top:868.00px;font-size:11.25px;line-height:16px;color:#fff;letter-spacing:-0.110px;">Data Structure</span>
<div style="left:1012px;top:864px;width:1px;height:24px;background:#2c2f31;"></div>
<div style="left:1089px;top:864px;width:1px;height:24px;background:#2c2f31;"></div>
<div style="left:1014px;top:866px;width:74px;height:20px;background:#1e5a91;border-radius:3px;"></div>
<span class="t" style="left:1033.50px;top:868.00px;font-size:11.75px;line-height:16px;color:#fff;letter-spacing:-0.047px;">Output</span>
<div style="left:1092px;top:864px;width:1px;height:24px;background:#2c2f31;"></div>
<div style="left:1169px;top:864px;width:1px;height:24px;background:#2c2f31;"></div>
<div style="left:1094px;top:866px;width:74px;height:20px;background:#1e5a91;border-radius:3px;"></div>
<span class="t" style="left:1116.50px;top:868.00px;font-size:11.25px;line-height:16px;color:#fff;letter-spacing:-0.586px;">Issues</span>
<div style="left:1172px;top:864px;width:1px;height:24px;background:#2c2f31;"></div>
<div style="left:1249px;top:864px;width:1px;height:24px;background:#2c2f31;"></div>
<div style="left:1174px;top:866px;width:74px;height:20px;background:#1e5a91;border-radius:3px;"></div>
<span class="t" style="left:1183.75px;top:868.00px;font-size:11.25px;line-height:16px;color:#fff;letter-spacing:-0.198px;">Bookmarks</span>
<div style="left:1252px;top:864px;width:1px;height:24px;background:#2c2f31;"></div>
<div style="left:1361px;top:864px;width:1px;height:24px;background:#2c2f31;"></div>
<div style="left:1254px;top:866px;width:106px;height:20px;background:#585c5e;border-radius:3px;"></div>
<span class="t" style="left:1261.50px;top:868.00px;font-size:11.25px;line-height:16px;color:#fff;letter-spacing:-0.312px;">Pinned Parameters</span>
<div style="left:1364px;top:864px;width:1px;height:24px;background:#2c2f31;"></div>
<div style="left:1469px;top:864px;width:1px;height:24px;background:#2c2f31;"></div>
<div style="left:1366px;top:866px;width:102px;height:20px;background:#1e5a91;border-radius:3px;"></div>
<span class="t" style="left:1373.00px;top:868.00px;font-size:11.25px;line-height:16px;color:#fff;letter-spacing:-0.194px;">Render Properties</span>
<div style="left:0px;top:0px;width:1470px;height:1px;background:#10a8ea;"></div>
<div style="left:0px;top:0px;width:1px;height:889px;background:#10a8ea;"></div>
<div style="left:1469px;top:0px;width:1px;height:889px;background:#10a8ea;"></div>
<div style="left:0px;top:888px;width:1470px;height:1px;background:#10a8ea;"></div>
</div></body></html>
